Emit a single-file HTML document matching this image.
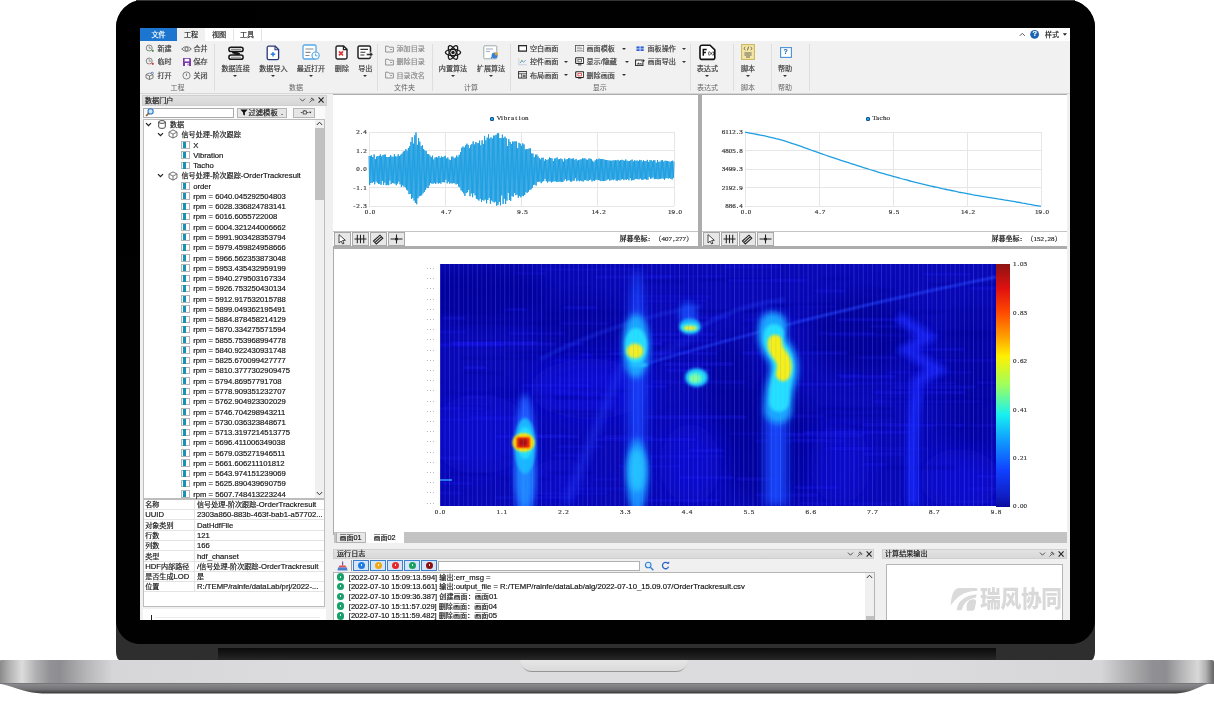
<!DOCTYPE html><html lang="zh"><head><meta charset="utf-8"><title>DataLab</title><style>
*{box-sizing:border-box;margin:0;padding:0}
html,body{width:1214px;height:714px;overflow:hidden;background:#fff}
body{position:relative;font-family:"Liberation Sans","Noto Sans CJK SC",sans-serif;font-size:7.5px;color:#222;line-height:1}
.a{position:absolute}
.t{position:absolute;white-space:nowrap;line-height:10px;height:10px;font-size:7.1px;color:#161616;-webkit-text-stroke-width:.18px}
.g{color:#555}
.mono{font-family:"Liberation Serif","Noto Serif CJK SC",serif}
</style></head><body><div id="root" style="position:absolute;left:0;top:0;width:1214px;height:714px;will-change:transform;opacity:.999">
<div class="a" style="left:116px;top:0;width:979px;height:661px;background:#2e2e2e;border-radius:27px 27px 5px 5px / 27px 27px 9px 9px"></div>
<div class="a" style="left:218px;top:648px;width:778px;height:13px;background:linear-gradient(#0a0a0a,#1c1c1c 60%,#2a2a2a)"></div>
<div class="a" style="left:116px;top:0;width:979px;height:644px;background:#000;border-radius:27px 27px 26px 26px"></div>
<div class="a" style="left:136px;top:0;width:939px;height:1px;background:#343434"></div>
<div class="a" style="left:0;top:660px;width:1214px;height:23.5px;border-radius:1px 2px 0 0;background:linear-gradient(90deg,#8a8a8a 0,#b4b4b4 10px,#dcdcdc 22px,#b0b0b2 36px,#929296 50px,#8e8e92 60px,#b4b4b6 85px,#d6d6d8 113px,#dcdcde 300px,#dcdcde 900px,#d6d6d8 1101px,#b4b4b6 1125px,#909094 1153px,#8e8e92 1166px,#b8b8ba 1183px,#d8d8d8 1198px,#b0b0b0 1206px,#6a6a6a 1213px)"></div>
<svg class="a" style="left:0;top:683px" width="1214" height="12" viewBox="0 0 1214 12"><defs><linearGradient id="bb" x1="0" y1="0" x2="0" y2="1"><stop offset="0" stop-color="#6a6a6e"/><stop offset="0.12" stop-color="#8a8a8e"/><stop offset="0.6" stop-color="#737376"/><stop offset="1" stop-color="#38383a"/></linearGradient></defs><path d="M0 0 H1214 V.6 L1208 .8 C1196 5 1190 10.2 1176 10.400 H42 C28 10.400 18 5 0 .8 Z" fill="url(#bb)"/></svg>
<div class="a" style="left:520px;top:660px;width:168px;height:12px;border-radius:0 0 12px 12px;background:linear-gradient(#e4e4e4,#d2d2d2 60%,#8e8e8e)"></div>
<div class="a" style="left:521px;top:660px;width:166px;height:10.5px;border-radius:0 0 11px 11px;background:linear-gradient(#e6e6e6,#dadada)"></div>
<div class="a" style="left:140px;top:28px;width:930px;height:592px;background:#f0f0f0;overflow:hidden"></div>
<div class="a" style="left:140px;top:28px;width:930px;height:13px;background:#fff"></div>
<div class="a" style="left:140px;top:28px;width:37px;height:12.5px;background:#1c76cf"></div>
<div class="a" style="left:177px;top:28px;width:28px;height:13px;background:#f1f1f1"></div>
<div class="a" style="left:233px;top:29px;width:1px;height:12px;background:#e3e3e3"></div>
<div class="a" style="left:261px;top:29px;width:1px;height:12px;background:#e3e3e3"></div>
<div class="t" style="left:140px;top:30.2px;width:37px;text-align:center;color:#fff">文件</div>
<div class="t" style="left:177px;top:30.2px;width:28px;text-align:center;color:#222">工程</div>
<div class="t" style="left:205px;top:30.2px;width:28px;text-align:center;color:#222">视图</div>
<div class="t" style="left:233px;top:30.2px;width:28px;text-align:center;color:#222">工具</div>
<svg class="a" style="left:1018px;top:29px" width="52" height="11" viewBox="0 0 52 11"><path d="M1.8 6.8 L4.3 4.3 L6.8 6.8" fill="none" stroke="#555" stroke-width="1"/><circle cx="16.6" cy="5.3" r="4.4" fill="#1c62b4"/><path d="M44.8 4.3 h4.2 l-2.1 2.5z" fill="#222"/></svg>
<div class="t" style="left:1032.400px;top:29.400px;color:#fff;font-size:7.500px;font-weight:bold">?</div>
<div class="t" style="left:1045px;top:29.800px;font-size:7px">样式</div>
<div class="a" style="left:140px;top:40.5px;width:930px;height:53px;background:#f1f1f1;border-bottom:1px solid #d6d6d6"></div>
<div class="a" style="left:214px;top:44px;width:1px;height:47px;background:#dedede"></div>
<div class="a" style="left:377.4px;top:44px;width:1px;height:47px;background:#dedede"></div>
<div class="a" style="left:431.6px;top:44px;width:1px;height:47px;background:#dedede"></div>
<div class="a" style="left:510.4px;top:44px;width:1px;height:47px;background:#dedede"></div>
<div class="a" style="left:690px;top:44px;width:1px;height:47px;background:#dedede"></div>
<div class="a" style="left:732.6px;top:44px;width:1px;height:47px;background:#dedede"></div>
<div class="a" style="left:770.6px;top:44px;width:1px;height:47px;background:#dedede"></div>
<div class="a" style="left:808.6px;top:44px;width:1px;height:47px;background:#dedede"></div>
<div class="t g" style="left:147.5px;top:83px;width:60px;text-align:center;font-size:7px;color:#666;-webkit-text-stroke-width:0">工程</div>
<div class="t g" style="left:266px;top:83px;width:60px;text-align:center;font-size:7px;color:#666;-webkit-text-stroke-width:0">数据</div>
<div class="t g" style="left:374.4px;top:83px;width:60px;text-align:center;font-size:7px;color:#666;-webkit-text-stroke-width:0">文件夹</div>
<div class="t g" style="left:441px;top:83px;width:60px;text-align:center;font-size:7px;color:#666;-webkit-text-stroke-width:0">计算</div>
<div class="t g" style="left:569.7px;top:83px;width:60px;text-align:center;font-size:7px;color:#666;-webkit-text-stroke-width:0">显示</div>
<div class="t g" style="left:677.4px;top:83px;width:60px;text-align:center;font-size:7px;color:#666;-webkit-text-stroke-width:0">表达式</div>
<div class="t g" style="left:718px;top:83px;width:60px;text-align:center;font-size:7px;color:#666;-webkit-text-stroke-width:0">脚本</div>
<div class="t g" style="left:755px;top:83px;width:60px;text-align:center;font-size:7px;color:#666;-webkit-text-stroke-width:0">帮助</div>
<div class="t" style="left:157.5px;top:44.2px;color:#3a3a3a">新建</div>
<div class="t" style="left:193.5px;top:44.2px;color:#3a3a3a">合并</div>
<div class="t" style="left:157.5px;top:57.4px;color:#3a3a3a">临时</div>
<div class="t" style="left:193.5px;top:57.4px;color:#3a3a3a">保存</div>
<div class="t" style="left:157.5px;top:70.7px;color:#3a3a3a">打开</div>
<div class="t" style="left:193.5px;top:70.7px;color:#3a3a3a">关闭</div>
<svg class="a" style="left:145px;top:44px" width="10" height="9" viewBox="0 0 10 9"><circle cx="4.2" cy="4" r="3" fill="none" stroke="#777" stroke-width="0.9"/><path d="M4.2 2.2v2h1.6" stroke="#777" stroke-width=".8" fill="none"/><circle cx="7.8" cy="6.8" r="1.1" fill="#3a9a3a"/></svg>
<svg class="a" style="left:145px;top:57.2px" width="10" height="9" viewBox="0 0 10 9"><circle cx="4.2" cy="4" r="3" fill="none" stroke="#777" stroke-width="0.9"/><path d="M4.2 2.2v2h1.6" stroke="#777" stroke-width=".8" fill="none"/><circle cx="7.8" cy="6.8" r="1.1" fill="#d33"/></svg>
<svg class="a" style="left:145px;top:70.5px" width="10" height="9" viewBox="0 0 10 9"><path d="M1 3.5 l3.5-1.5 3.5 1.5v3.5l-3.5 1.5-3.5-1.5z M1 3.5l3.5 1.5 3.5-1.5 M4.5 5v3.5" fill="none" stroke="#666" stroke-width="0.8"/><path d="M6 1.5 q2-.8 3 1" stroke="#2a6fc0" stroke-width=".8" fill="none"/></svg>
<svg class="a" style="left:181px;top:44.5px" width="11" height="8" viewBox="0 0 11 8"><path d="M.7 4 Q5.5-.8 10.3 4 Q5.5 8.8 .7 4z" fill="none" stroke="#666" stroke-width=".9"/><circle cx="5.5" cy="4" r="1.6" fill="none" stroke="#666" stroke-width=".9"/></svg>
<svg class="a" style="left:181.5px;top:57px" width="10" height="10" viewBox="0 0 10 10"><path d="M1 1h7l1 1v7h-8z" fill="#7b3aa8"/><rect x="2.6" y="1.8" width="4.6" height="2.6" fill="#fff"/><rect x="3" y="6" width="4" height="3" fill="#fff"/><rect x="5.5" y="6.5" width="1" height="2" fill="#7b3aa8"/></svg>
<svg class="a" style="left:182px;top:70.5px" width="9" height="9" viewBox="0 0 9 9"><circle cx="4.5" cy="4.5" r="3.6" fill="none" stroke="#777" stroke-width=".9"/><path d="M4.5 2.5v2.6" stroke="#777" stroke-width=".9"/></svg>
<div class="t" style="left:210.6px;top:63.6px;width:50px;text-align:center;color:#3a3a3a">数据连接</div>
<div class="a" style="left:233.4px;top:75px;border:2.2px solid transparent;border-top:2.6px solid #333;width:0;height:0"></div>
<div class="t" style="left:248.4px;top:63.6px;width:50px;text-align:center;color:#3a3a3a">数据导入</div>
<div class="a" style="left:271.2px;top:75px;border:2.2px solid transparent;border-top:2.6px solid #333;width:0;height:0"></div>
<div class="t" style="left:286px;top:63.6px;width:50px;text-align:center;color:#3a3a3a">最近打开</div>
<div class="a" style="left:308.8px;top:75px;border:2.2px solid transparent;border-top:2.6px solid #333;width:0;height:0"></div>
<div class="t" style="left:316.9px;top:63.6px;width:50px;text-align:center;color:#3a3a3a">删除</div>
<div class="t" style="left:340.3px;top:63.6px;width:50px;text-align:center;color:#3a3a3a">导出</div>
<div class="a" style="left:363.1px;top:75px;border:2.2px solid transparent;border-top:2.6px solid #333;width:0;height:0"></div>
<div class="t" style="left:428px;top:63.6px;width:50px;text-align:center;color:#3a3a3a">内置算法</div>
<div class="a" style="left:450.8px;top:75px;border:2.2px solid transparent;border-top:2.6px solid #333;width:0;height:0"></div>
<div class="t" style="left:466px;top:63.6px;width:50px;text-align:center;color:#3a3a3a">扩展算法</div>
<div class="a" style="left:488.8px;top:75px;border:2.2px solid transparent;border-top:2.6px solid #333;width:0;height:0"></div>
<div class="t" style="left:682.4px;top:63.6px;width:50px;text-align:center;color:#3a3a3a">表达式</div>
<div class="a" style="left:705.2px;top:75px;border:2.2px solid transparent;border-top:2.6px solid #333;width:0;height:0"></div>
<div class="t" style="left:723px;top:63.6px;width:50px;text-align:center;color:#3a3a3a">脚本</div>
<div class="a" style="left:745.8px;top:75px;border:2.2px solid transparent;border-top:2.6px solid #333;width:0;height:0"></div>
<div class="t" style="left:760px;top:63.6px;width:50px;text-align:center;color:#3a3a3a">帮助</div>
<div class="a" style="left:782.8px;top:75px;border:2.2px solid transparent;border-top:2.6px solid #333;width:0;height:0"></div>
<svg class="a" style="left:227px;top:44.5px" width="18" height="16" viewBox="0 0 18 16"><path d="M5.500 6.600 L12.500 9.800" stroke="#1a1a1a" stroke-width="3.200"/><rect x="1.900" y="2.300" width="14.200" height="4.200" rx="2.100" fill="#f1f1f1" stroke="#151515" stroke-width="1.500"/><rect x="1.900" y="10.100" width="14.200" height="4.200" rx="2.100" fill="#f1f1f1" stroke="#151515" stroke-width="1.500"/><path d="M4 4.400h10M4 12.200h10" stroke="#8a8a8a" stroke-width="1.100"/></svg>
<svg class="a" style="left:266px;top:44.5px" width="15" height="16" viewBox="0 0 15 16"><path d="M2.6 1.2h6.6l3.4 3.4v8.6a1.4 1.4 0 0 1-1.4 1.4h-8.6a1.4 1.4 0 0 1-1.4-1.4v-10.6a1.4 1.4 0 0 1 1.4-1.4z" fill="#fff" stroke="#27367f" stroke-width="1.3"/><path d="M9 1.2v3.6h3.6" fill="none" stroke="#27367f" stroke-width="1.1"/><path d="M7 7v4.6M4.7 9.3h4.6" stroke="#2b7fe0" stroke-width="1.5"/></svg>
<svg class="a" style="left:302px;top:44px" width="19" height="17" viewBox="0 0 19 17"><rect x="1" y="1" width="13" height="14" rx="1.6" fill="#fff" stroke="#55a8e6" stroke-width="1.3"/><path d="M3.5 5h8M3.5 8.3h5M3.5 11.5h4" stroke="#8a8a8a" stroke-width="1.2"/><circle cx="13.6" cy="11.6" r="3.6" fill="#fff" stroke="#55a8e6" stroke-width="1.2"/><path d="M13.6 9.6v2.2h1.8" fill="none" stroke="#55a8e6" stroke-width="1"/></svg>
<svg class="a" style="left:335px;top:45px" width="14" height="15" viewBox="0 0 14 15"><path d="M2.4 1h6.2l3.4 3.4v8.2a1.4 1.4 0 0 1-1.4 1.4h-8.2a1.4 1.4 0 0 1-1.4-1.4v-10.2a1.4 1.4 0 0 1 1.4-1.4z" fill="#fff" stroke="#222" stroke-width="1.4"/><path d="M8.4 1v3.6h3.6" fill="none" stroke="#222" stroke-width="1.2"/><path d="M4 6.4l4 4M8 6.4l-4 4" stroke="#e03030" stroke-width="1.6"/></svg>
<svg class="a" style="left:357px;top:45px" width="17" height="15" viewBox="0 0 17 15"><rect x="1" y="1" width="12.5" height="12.5" rx="1.4" fill="#fff" stroke="#222" stroke-width="1.5"/><path d="M3.4 4.4h7.6M3.4 7.2h5M3.4 10h4" stroke="#333" stroke-width="1.1"/><path d="M9.6 8.4h3.6v-1.6l3 2.6-3 2.6v-1.6h-3.6z" fill="#222" stroke="#fff" stroke-width=".5"/></svg>
<svg class="a" style="left:444px;top:43.5px" width="18" height="17" viewBox="0 0 18 17"><g fill="none" stroke="#1a1a1a" stroke-width="1.3"><ellipse cx="9" cy="8.5" rx="7.6" ry="3.2"/><ellipse cx="9" cy="8.5" rx="7.6" ry="3.2" transform="rotate(60 9 8.5)"/><ellipse cx="9" cy="8.5" rx="7.6" ry="3.2" transform="rotate(-60 9 8.5)"/></g><circle cx="9" cy="8.5" r="1.7" fill="#1a1a1a"/></svg>
<svg class="a" style="left:483px;top:45px" width="17" height="16" viewBox="0 0 17 16"><rect x=".8" y=".8" width="13" height="13" rx="1" fill="#fff" stroke="#9aa" stroke-width="1"/><path d="M3 4h7M3 6.4h4" stroke="#9ab" stroke-width="1"/><circle cx="11.6" cy="10.4" r="3" fill="#3a7fd6"/><circle cx="13.2" cy="8.8" r="1.6" fill="#e0a030"/><path d="M8 13l2.4-2" stroke="#3a7fd6" stroke-width="1.2"/></svg>
<svg class="a" style="left:698.5px;top:44px" width="18" height="17" viewBox="0 0 18 17"><path d="M3 1.2h8l4.8 4.6v7.6a2 2 0 0 1-2 2h-10.800a2 2 0 0 1-2-2v-10.2a2 2 0 0 1 2-2z" fill="#fff" stroke="#111" stroke-width="1.6"/><path d="M4.3 11.800v-6.200h3.400M4.3 8.600h2.6" fill="none" stroke="#111" stroke-width="1.5"/><path d="M10.3 7.400q-1.4 2 0 4.200M14 7.400q1.4 2 0 4.200M11.3 8.400l1.8 2.200M13.1 8.400l-1.8 2.2" fill="none" stroke="#111" stroke-width=".8"/></svg>
<svg class="a" style="left:741px;top:44px" width="14" height="16" viewBox="0 0 14 16"><rect x=".6" y=".6" width="12.8" height="14.8" fill="#f4e7a6" stroke="#c9b458" stroke-width="1"/><path d="M4.4 3l-1.6 1.5 1.6 1.500M9.6 3l1.6 1.5-1.6 1.500M7.6 2.600l-1.2 3.800M3.4 9h7.200M3.4 11h7.200M5 13h4" fill="none" stroke="#444" stroke-width=".8"/></svg>
<svg class="a" style="left:779.500px;top:46.500px" width="12" height="11" viewBox="0 0 12 11"><rect x=".6" y=".6" width="10.8" height="9.8" fill="#fff" stroke="#4a90d9" stroke-width="1.1"/></svg>
<div class="t" style="left:783.400px;top:47.200px;color:#2b6fc0;font-size:7px;font-weight:bold">?</div>
<div class="t" style="left:396.5px;top:44.2px;color:#8a8a8a">添加目录</div>
<svg class="a" style="left:384.500px;top:44.5px" width="9" height="8" viewBox="0 0 9 8"><path d="M.6 1.200h2.600l.8 1h4.400v4.800h-7.800z" fill="none" stroke="#8a8a8a" stroke-width=".9"/><path d="M5 4.500h2" stroke="#8a8a8a" stroke-width=".8"/></svg>
<div class="t" style="left:396.5px;top:57.4px;color:#8a8a8a">删除目录</div>
<svg class="a" style="left:384.500px;top:57.7px" width="9" height="8" viewBox="0 0 9 8"><path d="M.6 1.200h2.600l.8 1h4.400v4.800h-7.800z" fill="none" stroke="#8a8a8a" stroke-width=".9"/><path d="M5 4.500h2" stroke="#8a8a8a" stroke-width=".8"/></svg>
<div class="t" style="left:396.5px;top:70.7px;color:#8a8a8a">目录改名</div>
<svg class="a" style="left:384.500px;top:71px" width="9" height="8" viewBox="0 0 9 8"><path d="M.6 1.200h2.600l.8 1h4.400v4.800h-7.800z" fill="none" stroke="#8a8a8a" stroke-width=".9"/><path d="M5 4.500h2" stroke="#8a8a8a" stroke-width=".8"/></svg>
<div class="t" style="left:530px;top:44.2px;color:#3a3a3a">空白画面</div>
<div class="t" style="left:586.5px;top:44.2px;color:#3a3a3a">画面模板</div>
<div class="t" style="left:647.5px;top:44.2px;color:#3a3a3a">面板操作</div>
<div class="t" style="left:530px;top:57.4px;color:#3a3a3a">控件画面</div>
<div class="t" style="left:586.5px;top:57.4px;color:#3a3a3a">显示<span style="font-size:7.4px">/</span>隐藏</div>
<div class="t" style="left:647.5px;top:57.4px;color:#3a3a3a">画面导出</div>
<div class="t" style="left:530px;top:70.7px;color:#3a3a3a">布局画面</div>
<div class="t" style="left:586.5px;top:70.7px;color:#3a3a3a">删除画面</div>
<div class="a" style="left:563.7px;top:60.7px;border:2px solid transparent;border-top:2.400px solid #333;width:0;height:0"></div>
<div class="a" style="left:563.7px;top:74px;border:2px solid transparent;border-top:2.400px solid #333;width:0;height:0"></div>
<div class="a" style="left:621.7px;top:47.5px;border:2px solid transparent;border-top:2.400px solid #333;width:0;height:0"></div>
<div class="a" style="left:625px;top:60.7px;border:2px solid transparent;border-top:2.400px solid #333;width:0;height:0"></div>
<div class="a" style="left:621.7px;top:74px;border:2px solid transparent;border-top:2.400px solid #333;width:0;height:0"></div>
<div class="a" style="left:681.7px;top:47.5px;border:2px solid transparent;border-top:2.400px solid #333;width:0;height:0"></div>
<div class="a" style="left:681.7px;top:60.7px;border:2px solid transparent;border-top:2.400px solid #333;width:0;height:0"></div>
<svg class="a" style="left:517.83px;top:45.1px" width="9.35" height="6.8" viewBox="0 0 11 8"><rect x=".8" y=".8" width="9.4" height="6.4" fill="#fff" stroke="#222" stroke-width="1.5"/></svg>
<svg class="a" style="left:517.83px;top:58.17px" width="9.35" height="7.65" viewBox="0 0 11 9"><path d="M1 .5v7.500h9.5" fill="none" stroke="#b9c4d6" stroke-width=".9"/><path d="M2.5 6l2-3 2 2 2.5-2.5" fill="none" stroke="#3a9ad6" stroke-width="1"/><circle cx="4.5" cy="3" r=".9" fill="#e0a030"/></svg>
<svg class="a" style="left:517.83px;top:71.17px" width="9.35" height="7.65" viewBox="0 0 11 9"><rect x=".7" y=".7" width="9.6" height="7.6" fill="#fff" stroke="#333" stroke-width="1.2"/><path d="M.7 3.200h9.600M4 3.200v5" stroke="#333" stroke-width=".9"/><rect x="5.4" y="4.4" width="3.6" height="2.8" fill="#666"/></svg>
<svg class="a" style="left:574.83px;top:44.67px" width="9.35" height="7.65" viewBox="0 0 11 9"><rect x=".6" y=".6" width="9.8" height="7.8" fill="#fff" stroke="#555" stroke-width="1"/><path d="M2 2.600h4M2 4.400h7M2 6.400h7M7 2v2.4" stroke="#777" stroke-width=".8"/></svg>
<svg class="a" style="left:574.800px;top:57.4px" width="9.400" height="8.600" viewBox="0 0 11 10"><rect x=".8" y=".8" width="9.4" height="6.8" rx="1" fill="#fff" stroke="#222" stroke-width="1.3"/><path d="M3.5 9.200h4" stroke="#222" stroke-width="1.1"/><rect x="3.4" y="2.7" width="4.2" height="3" fill="none" stroke="#444" stroke-width=".9"/></svg>
<svg class="a" style="left:574.800px;top:70.7px" width="9.400" height="8.600" viewBox="0 0 11 10"><rect x=".8" y=".8" width="9.4" height="6.8" rx="1" fill="#fff" stroke="#222" stroke-width="1.3"/><path d="M3.5 9.200h4" stroke="#222" stroke-width="1.1"/><rect x="3.4" y="2.7" width="4.2" height="3" fill="none" stroke="#d33" stroke-width=".9"/></svg>
<svg class="a" style="left:636.25px;top:45.52px" width="8.5" height="5.95" viewBox="0 0 10 7"><rect x=".5" y=".5" width="3.8" height="2.5" fill="#2f62d8"/><rect x="5.3" y=".5" width="3.8" height="2.5" fill="#2f62d8"/><rect x=".5" y="3.8" width="3.8" height="2.5" fill="#2f62d8"/><rect x="5.3" y="3.8" width="3.8" height="2.5" fill="#2f62d8"/></svg>
<svg class="a" style="left:635.4px;top:57.75px" width="10.2" height="8.5" viewBox="0 0 12 10"><rect x=".7" y="2.4" width="8.6" height="6.6" fill="#fff" stroke="#222" stroke-width="1.2"/><path d="M2 7.600l2-2.6 1.6 1.8 1.4-1.2 1.6 2z" fill="#444"/><path d="M7 2.600h2.400v-1.600l2.4 2.2-2.4 2.200v-1.400h-2.400z" fill="#222" stroke="#fff" stroke-width=".4"/></svg>
<div class="a" style="left:142px;top:95px;width:185px;height:10.500px;background:linear-gradient(#e2e2e2,#d6d6d6);border:1px solid #cfcfcf"></div>
<div class="t" style="left:145px;top:96px">数据门户</div>
<svg class="a" style="left:299px;top:96.3px" width="27" height="8" viewBox="0 0 27 8"><path d="M1 2.600l2.5 2.6 2.5-2.6" fill="none" stroke="#444" stroke-width=".9"/><path d="M10.5 6.500l2-2M12 2l2.8 2.800M12.8 1.600l2.6 2.600M11.6 3.400l1.8 1.8" stroke="#444" stroke-width=".8" fill="none"/><path d="M19.6 1.400l5 5.200M24.6 1.400l-5 5.2" stroke="#222" stroke-width="1.1"/></svg>
<div class="a" style="left:142px;top:105.500px;width:183px;height:14px;background:#fafafa"></div>
<div class="a" style="left:143px;top:107.500px;width:91px;height:10px;background:#fff;border:1px solid #ababab"></div>
<svg class="a" style="left:145px;top:108.300px" width="10" height="9" viewBox="0 0 10 9"><circle cx="5.6" cy="3.4" r="2.6" fill="#cfe6fb" stroke="#2b78c8" stroke-width="1.1"/><path d="M3.6 5.400l-2.6 2.6" stroke="#8a5a2b" stroke-width="1.5"/></svg>
<div class="a" style="left:236.500px;top:107.500px;width:50.500px;height:10px;background:#e6e6e6;border:1px solid #b5b5b5"></div>
<svg class="a" style="left:239.500px;top:109.200px" width="8" height="7" viewBox="0 0 8 7"><path d="M.3 .4h7.400l-2.8 3.200v3l-1.8-1v-2z" fill="#111"/></svg>
<div class="t" style="left:248.500px;top:108.3px;font-size:7.3px">过滤模板</div>
<div class="a" style="left:281px;top:114px;border:1.500px solid transparent;border-top:1.800px solid #222;width:0;height:0"></div>
<div class="a" style="left:292.500px;top:107.500px;width:22px;height:10px;background:#e6e6e6;border:1px solid #b5b5b5"></div>
<svg class="a" style="left:299.500px;top:110px" width="12" height="5" viewBox="0 0 16 6"><path d="M1 3h2.400M9.4 3h2" stroke="#222" stroke-width="1"/><rect x="4.2" y="1" width="4.6" height="4" fill="none" stroke="#222" stroke-width=".9"/><path d="M5.5 1v-1h2" stroke="#222" stroke-width=".7" fill="none"/><path d="M12 2h3.200l-1.6 2.200z" fill="#222"/></svg>
<div class="a" style="left:143px;top:119px;width:182px;height:379.500px;background:#fff;border:1px solid #bdbdbd"></div>
<div class="a" style="left:314.500px;top:120px;width:9.500px;height:377.500px;background:#f0f0f0"></div>
<div class="a" style="left:315.300px;top:128px;width:8.400px;height:72px;background:#c1c1c1"></div>
<svg class="a" style="left:316px;top:121px" width="7" height="5" viewBox="0 0 7 5"><path d="M.8 4l2.7-2.8 2.7 2.8" fill="none" stroke="#333" stroke-width="1"/></svg>
<svg class="a" style="left:316px;top:490.500px" width="7" height="5" viewBox="0 0 7 5"><path d="M.8 1l2.7 2.8 2.7-2.8" fill="none" stroke="#333" stroke-width="1"/></svg>
<svg class="a" style="left:145px;top:121.8px" width="7" height="5" viewBox="0 0 7 5"><path d="M1 1.100l2.500 2.500 2.500-2.500" fill="none" stroke="#222" stroke-width="1.300"/></svg>
<svg class="a" style="left:157.500px;top:119.8px" width="8" height="9" viewBox="0 0 8 9"><path d="M.7 2v5c0 1.8 6.6 1.8 6.6 0v-5" fill="none" stroke="#333" stroke-width=".9"/><ellipse cx="4" cy="2" rx="3.3" ry="1.4" fill="none" stroke="#333" stroke-width=".9"/></svg>
<div class="t" style="left:170px;top:120px">数据</div>
<svg class="a" style="left:156.5px;top:132.07px" width="7" height="5" viewBox="0 0 7 5"><path d="M1 1.100l2.500 2.500 2.500-2.500" fill="none" stroke="#222" stroke-width="1.300"/></svg>
<svg class="a" style="left:168.2px;top:129.47px" width="10" height="10" viewBox="0 0 10 10"><path d="M5 .9L9 3V7L5 9.1L1 7V3Z" fill="none" stroke="#555" stroke-width=".85" stroke-linejoin="round"/><path d="M1.3 3.2L5 5.1L8.700 3.2M5 5.1V9" fill="none" stroke="#555" stroke-width=".8"/></svg>
<div class="t" style="left:181.5px;top:130.27px">信号处理<span style="font-size:7.7px">-</span>阶次跟踪</div>
<div class="a" style="left:181px;top:141.04px;width:8.500px;height:7.500px;border:1px solid #b5b5b5;background:#fff"></div>
<div class="a" style="left:183px;top:141.54px;width:2.600px;height:6.500px;background:#1593b5"></div>
<div class="t" style="left:193.2px;top:140.54px"><span style="font-size:7.7px">X</span></div>
<div class="a" style="left:181px;top:151.31px;width:8.500px;height:7.500px;border:1px solid #b5b5b5;background:#fff"></div>
<div class="a" style="left:183px;top:151.81px;width:2.600px;height:6.500px;background:#1593b5"></div>
<div class="t" style="left:193.2px;top:150.81px"><span style="font-size:7.7px">Vibration</span></div>
<div class="a" style="left:181px;top:161.58px;width:8.500px;height:7.500px;border:1px solid #b5b5b5;background:#fff"></div>
<div class="a" style="left:183px;top:162.08px;width:2.600px;height:6.500px;background:#1593b5"></div>
<div class="t" style="left:193.2px;top:161.08px"><span style="font-size:7.7px">Tacho</span></div>
<svg class="a" style="left:156.5px;top:173.15px" width="7" height="5" viewBox="0 0 7 5"><path d="M1 1.100l2.500 2.500 2.500-2.500" fill="none" stroke="#222" stroke-width="1.300"/></svg>
<svg class="a" style="left:168.2px;top:170.55px" width="10" height="10" viewBox="0 0 10 10"><path d="M5 .9L9 3V7L5 9.1L1 7V3Z" fill="none" stroke="#555" stroke-width=".85" stroke-linejoin="round"/><path d="M1.3 3.2L5 5.1L8.700 3.2M5 5.1V9" fill="none" stroke="#555" stroke-width=".8"/></svg>
<div class="t" style="left:181.5px;top:171.35px">信号处理<span style="font-size:7.7px">-</span>阶次跟踪<span style="font-size:7.7px">-OrderTrackresult</span></div>
<div class="a" style="left:181px;top:182.12px;width:8.500px;height:7.500px;border:1px solid #b5b5b5;background:#fff"></div>
<div class="a" style="left:183px;top:182.62px;width:2.600px;height:6.500px;background:#1593b5"></div>
<div class="t" style="left:193.2px;top:181.62px"><span style="font-size:7.7px">order</span></div>
<div class="a" style="left:181px;top:192.39px;width:8.500px;height:7.500px;border:1px solid #b5b5b5;background:#fff"></div>
<div class="a" style="left:183px;top:192.89px;width:2.600px;height:6.500px;background:#1593b5"></div>
<div class="t" style="left:193.2px;top:191.89px"><span style="font-size:7.7px">rpm = 6040.045292504803</span></div>
<div class="a" style="left:181px;top:202.66px;width:8.500px;height:7.500px;border:1px solid #b5b5b5;background:#fff"></div>
<div class="a" style="left:183px;top:203.16px;width:2.600px;height:6.500px;background:#1593b5"></div>
<div class="t" style="left:193.2px;top:202.16px"><span style="font-size:7.7px">rpm = 6028.336824783141</span></div>
<div class="a" style="left:181px;top:212.93px;width:8.500px;height:7.500px;border:1px solid #b5b5b5;background:#fff"></div>
<div class="a" style="left:183px;top:213.43px;width:2.600px;height:6.500px;background:#1593b5"></div>
<div class="t" style="left:193.2px;top:212.43px"><span style="font-size:7.7px">rpm = 6016.6055722008</span></div>
<div class="a" style="left:181px;top:223.2px;width:8.500px;height:7.500px;border:1px solid #b5b5b5;background:#fff"></div>
<div class="a" style="left:183px;top:223.7px;width:2.600px;height:6.500px;background:#1593b5"></div>
<div class="t" style="left:193.2px;top:222.7px"><span style="font-size:7.7px">rpm = 6004.321244006662</span></div>
<div class="a" style="left:181px;top:233.47px;width:8.500px;height:7.500px;border:1px solid #b5b5b5;background:#fff"></div>
<div class="a" style="left:183px;top:233.97px;width:2.600px;height:6.500px;background:#1593b5"></div>
<div class="t" style="left:193.2px;top:232.97px"><span style="font-size:7.7px">rpm = 5991.903428353794</span></div>
<div class="a" style="left:181px;top:243.74px;width:8.500px;height:7.500px;border:1px solid #b5b5b5;background:#fff"></div>
<div class="a" style="left:183px;top:244.24px;width:2.600px;height:6.500px;background:#1593b5"></div>
<div class="t" style="left:193.2px;top:243.24px"><span style="font-size:7.7px">rpm = 5979.459824958666</span></div>
<div class="a" style="left:181px;top:254.01px;width:8.500px;height:7.500px;border:1px solid #b5b5b5;background:#fff"></div>
<div class="a" style="left:183px;top:254.51px;width:2.600px;height:6.500px;background:#1593b5"></div>
<div class="t" style="left:193.2px;top:253.51px"><span style="font-size:7.7px">rpm = 5966.562353873048</span></div>
<div class="a" style="left:181px;top:264.28px;width:8.500px;height:7.500px;border:1px solid #b5b5b5;background:#fff"></div>
<div class="a" style="left:183px;top:264.78px;width:2.600px;height:6.500px;background:#1593b5"></div>
<div class="t" style="left:193.2px;top:263.78px"><span style="font-size:7.7px">rpm = 5953.435432959199</span></div>
<div class="a" style="left:181px;top:274.55px;width:8.500px;height:7.500px;border:1px solid #b5b5b5;background:#fff"></div>
<div class="a" style="left:183px;top:275.05px;width:2.600px;height:6.500px;background:#1593b5"></div>
<div class="t" style="left:193.2px;top:274.05px"><span style="font-size:7.7px">rpm = 5940.279503167334</span></div>
<div class="a" style="left:181px;top:284.82px;width:8.500px;height:7.500px;border:1px solid #b5b5b5;background:#fff"></div>
<div class="a" style="left:183px;top:285.32px;width:2.600px;height:6.500px;background:#1593b5"></div>
<div class="t" style="left:193.2px;top:284.32px"><span style="font-size:7.7px">rpm = 5926.753250430134</span></div>
<div class="a" style="left:181px;top:295.09px;width:8.500px;height:7.500px;border:1px solid #b5b5b5;background:#fff"></div>
<div class="a" style="left:183px;top:295.59px;width:2.600px;height:6.500px;background:#1593b5"></div>
<div class="t" style="left:193.2px;top:294.59px"><span style="font-size:7.7px">rpm = 5912.917532015788</span></div>
<div class="a" style="left:181px;top:305.36px;width:8.500px;height:7.500px;border:1px solid #b5b5b5;background:#fff"></div>
<div class="a" style="left:183px;top:305.86px;width:2.600px;height:6.500px;background:#1593b5"></div>
<div class="t" style="left:193.2px;top:304.86px"><span style="font-size:7.7px">rpm = 5899.049362195491</span></div>
<div class="a" style="left:181px;top:315.63px;width:8.500px;height:7.500px;border:1px solid #b5b5b5;background:#fff"></div>
<div class="a" style="left:183px;top:316.13px;width:2.600px;height:6.500px;background:#1593b5"></div>
<div class="t" style="left:193.2px;top:315.13px"><span style="font-size:7.7px">rpm = 5884.878458214129</span></div>
<div class="a" style="left:181px;top:325.9px;width:8.500px;height:7.500px;border:1px solid #b5b5b5;background:#fff"></div>
<div class="a" style="left:183px;top:326.4px;width:2.600px;height:6.500px;background:#1593b5"></div>
<div class="t" style="left:193.2px;top:325.4px"><span style="font-size:7.7px">rpm = 5870.334275571594</span></div>
<div class="a" style="left:181px;top:336.17px;width:8.500px;height:7.500px;border:1px solid #b5b5b5;background:#fff"></div>
<div class="a" style="left:183px;top:336.67px;width:2.600px;height:6.500px;background:#1593b5"></div>
<div class="t" style="left:193.2px;top:335.67px"><span style="font-size:7.7px">rpm = 5855.753968994778</span></div>
<div class="a" style="left:181px;top:346.44px;width:8.500px;height:7.500px;border:1px solid #b5b5b5;background:#fff"></div>
<div class="a" style="left:183px;top:346.94px;width:2.600px;height:6.500px;background:#1593b5"></div>
<div class="t" style="left:193.2px;top:345.94px"><span style="font-size:7.7px">rpm = 5840.922430931748</span></div>
<div class="a" style="left:181px;top:356.71px;width:8.500px;height:7.500px;border:1px solid #b5b5b5;background:#fff"></div>
<div class="a" style="left:183px;top:357.21px;width:2.600px;height:6.500px;background:#1593b5"></div>
<div class="t" style="left:193.2px;top:356.21px"><span style="font-size:7.7px">rpm = 5825.670099427777</span></div>
<div class="a" style="left:181px;top:366.98px;width:8.500px;height:7.500px;border:1px solid #b5b5b5;background:#fff"></div>
<div class="a" style="left:183px;top:367.48px;width:2.600px;height:6.500px;background:#1593b5"></div>
<div class="t" style="left:193.2px;top:366.48px"><span style="font-size:7.7px">rpm = 5810.3777302909475</span></div>
<div class="a" style="left:181px;top:377.25px;width:8.500px;height:7.500px;border:1px solid #b5b5b5;background:#fff"></div>
<div class="a" style="left:183px;top:377.75px;width:2.600px;height:6.500px;background:#1593b5"></div>
<div class="t" style="left:193.2px;top:376.75px"><span style="font-size:7.7px">rpm = 5794.86957791708</span></div>
<div class="a" style="left:181px;top:387.52px;width:8.500px;height:7.500px;border:1px solid #b5b5b5;background:#fff"></div>
<div class="a" style="left:183px;top:388.02px;width:2.600px;height:6.500px;background:#1593b5"></div>
<div class="t" style="left:193.2px;top:387.02px"><span style="font-size:7.7px">rpm = 5778.909351232707</span></div>
<div class="a" style="left:181px;top:397.79px;width:8.500px;height:7.500px;border:1px solid #b5b5b5;background:#fff"></div>
<div class="a" style="left:183px;top:398.29px;width:2.600px;height:6.500px;background:#1593b5"></div>
<div class="t" style="left:193.2px;top:397.29px"><span style="font-size:7.7px">rpm = 5762.904923302029</span></div>
<div class="a" style="left:181px;top:408.06px;width:8.500px;height:7.500px;border:1px solid #b5b5b5;background:#fff"></div>
<div class="a" style="left:183px;top:408.56px;width:2.600px;height:6.500px;background:#1593b5"></div>
<div class="t" style="left:193.2px;top:407.56px"><span style="font-size:7.7px">rpm = 5746.704298943211</span></div>
<div class="a" style="left:181px;top:418.33px;width:8.500px;height:7.500px;border:1px solid #b5b5b5;background:#fff"></div>
<div class="a" style="left:183px;top:418.83px;width:2.600px;height:6.500px;background:#1593b5"></div>
<div class="t" style="left:193.2px;top:417.83px"><span style="font-size:7.7px">rpm = 5730.036323848671</span></div>
<div class="a" style="left:181px;top:428.6px;width:8.500px;height:7.500px;border:1px solid #b5b5b5;background:#fff"></div>
<div class="a" style="left:183px;top:429.1px;width:2.600px;height:6.500px;background:#1593b5"></div>
<div class="t" style="left:193.2px;top:428.1px"><span style="font-size:7.7px">rpm = 5713.3197214513775</span></div>
<div class="a" style="left:181px;top:438.87px;width:8.500px;height:7.500px;border:1px solid #b5b5b5;background:#fff"></div>
<div class="a" style="left:183px;top:439.37px;width:2.600px;height:6.500px;background:#1593b5"></div>
<div class="t" style="left:193.2px;top:438.37px"><span style="font-size:7.7px">rpm = 5696.411006349038</span></div>
<div class="a" style="left:181px;top:449.14px;width:8.500px;height:7.500px;border:1px solid #b5b5b5;background:#fff"></div>
<div class="a" style="left:183px;top:449.64px;width:2.600px;height:6.500px;background:#1593b5"></div>
<div class="t" style="left:193.2px;top:448.64px"><span style="font-size:7.7px">rpm = 5679.035271946511</span></div>
<div class="a" style="left:181px;top:459.41px;width:8.500px;height:7.500px;border:1px solid #b5b5b5;background:#fff"></div>
<div class="a" style="left:183px;top:459.91px;width:2.600px;height:6.500px;background:#1593b5"></div>
<div class="t" style="left:193.2px;top:458.91px"><span style="font-size:7.7px">rpm = 5661.606211101812</span></div>
<div class="a" style="left:181px;top:469.68px;width:8.500px;height:7.500px;border:1px solid #b5b5b5;background:#fff"></div>
<div class="a" style="left:183px;top:470.18px;width:2.600px;height:6.500px;background:#1593b5"></div>
<div class="t" style="left:193.2px;top:469.18px"><span style="font-size:7.7px">rpm = 5643.974151239069</span></div>
<div class="a" style="left:181px;top:479.95px;width:8.500px;height:7.500px;border:1px solid #b5b5b5;background:#fff"></div>
<div class="a" style="left:183px;top:480.45px;width:2.600px;height:6.500px;background:#1593b5"></div>
<div class="t" style="left:193.2px;top:479.45px"><span style="font-size:7.7px">rpm = 5625.890439690759</span></div>
<div class="a" style="left:181px;top:490.22px;width:8.500px;height:7.500px;border:1px solid #b5b5b5;background:#fff"></div>
<div class="a" style="left:183px;top:490.72px;width:2.600px;height:6.500px;background:#1593b5"></div>
<div class="t" style="left:193.2px;top:489.72px"><span style="font-size:7.7px">rpm = 5607.748413223244</span></div>
<div class="a" style="left:143px;top:499px;width:182px;height:108px;background:#fff;border:1px solid #bdbdbd"></div>
<div class="t" style="left:145.200px;top:500.2px">名称</div>
<div class="t" style="left:197px;top:500.2px">信号处理<span style="font-size:7.7px">-</span>阶次跟踪<span style="font-size:7.7px">-OrderTrackresult</span></div>
<div class="a" style="left:144px;top:509.1px;width:180px;height:1px;background:#e4e4e4"></div>
<div class="t" style="left:145.200px;top:510.48px"><span style="font-size:7.7px">UUID</span></div>
<div class="t" style="left:197px;top:510.48px"><span style="font-size:7.7px">2303a860-883b-463f-bab1-a57702...</span></div>
<div class="a" style="left:144px;top:519.38px;width:180px;height:1px;background:#e4e4e4"></div>
<div class="t" style="left:145.200px;top:520.76px">对象类别</div>
<div class="t" style="left:197px;top:520.76px"><span style="font-size:7.7px">DatHdfFile</span></div>
<div class="a" style="left:144px;top:529.66px;width:180px;height:1px;background:#e4e4e4"></div>
<div class="t" style="left:145.200px;top:531.04px">行数</div>
<div class="t" style="left:197px;top:531.04px"><span style="font-size:7.7px">121</span></div>
<div class="a" style="left:144px;top:539.94px;width:180px;height:1px;background:#e4e4e4"></div>
<div class="t" style="left:145.200px;top:541.32px">列数</div>
<div class="t" style="left:197px;top:541.32px"><span style="font-size:7.7px">166</span></div>
<div class="a" style="left:144px;top:550.22px;width:180px;height:1px;background:#e4e4e4"></div>
<div class="t" style="left:145.200px;top:551.6px">类型</div>
<div class="t" style="left:197px;top:551.6px"><span style="font-size:7.7px">hdf_chanset</span></div>
<div class="a" style="left:144px;top:560.5px;width:180px;height:1px;background:#e4e4e4"></div>
<div class="t" style="left:145.200px;top:561.88px"><span style="font-size:7.7px">HDF</span>内部路径</div>
<div class="t" style="left:197px;top:561.88px"><span style="font-size:7.7px">/</span>信号处理<span style="font-size:7.7px">-</span>阶次跟踪<span style="font-size:7.7px">-OrderTrackresult</span></div>
<div class="a" style="left:144px;top:570.78px;width:180px;height:1px;background:#e4e4e4"></div>
<div class="t" style="left:145.200px;top:572.16px">是否生成<span style="font-size:7.7px">LOD</span></div>
<div class="t" style="left:197px;top:572.16px">是</div>
<div class="a" style="left:144px;top:581.06px;width:180px;height:1px;background:#e4e4e4"></div>
<div class="t" style="left:145.200px;top:582.44px">位置</div>
<div class="t" style="left:197px;top:582.44px"><span style="font-size:7.7px">R:/TEMP/rainfe/dataLab/prj/2022-...</span></div>
<div class="a" style="left:144px;top:591.34px;width:180px;height:1px;background:#e4e4e4"></div>
<div class="a" style="left:194.300px;top:500px;width:1px;height:92px;background:#e4e4e4"></div>
<div class="a" style="left:143px;top:609px;width:183px;height:11px;background:#fff"></div>
<div class="a" style="left:151.300px;top:615px;width:1px;height:5px;background:#222"></div>
<div class="a" style="left:155px;top:617px;width:165px;height:1px;background:#ececec"></div>
<div class="a" style="left:331px;top:93.5px;width:739px;height:441px;background:#acacac"></div>
<div class="a" style="left:333px;top:95px;width:364.5px;height:136px;background:#fff"></div>
<div class="a" style="left:702px;top:95px;width:364.5px;height:136px;background:#fff"></div>
<div class="a" style="left:333px;top:231px;width:364.5px;height:15.2px;background:#fff;border-top:1px solid #c4c4c4"></div>
<div class="a" style="left:702px;top:231px;width:364.5px;height:15.2px;background:#fff;border-top:1px solid #c4c4c4"></div>
<div class="a" style="left:1067px;top:93.5px;width:3px;height:441px;background:#f0f0f0"></div>
<div class="a" style="left:330px;top:93.5px;width:2.5px;height:441px;background:#f0f0f0"></div>
<div class="a" style="left:368.5px;top:132.2px;width:1px;height:74.2px;background:#e6e6e6"></div><div class="a" style="left:369px;top:131.7px;width:305px;height:1px;background:#e6e6e6"></div><div class="a" style="left:444.75px;top:132.2px;width:1px;height:74.2px;background:#e6e6e6"></div><div class="a" style="left:369px;top:150.25px;width:305px;height:1px;background:#e6e6e6"></div><div class="a" style="left:521px;top:132.2px;width:1px;height:74.2px;background:#e6e6e6"></div><div class="a" style="left:369px;top:168.8px;width:305px;height:1px;background:#e6e6e6"></div><div class="a" style="left:597.25px;top:132.2px;width:1px;height:74.2px;background:#e6e6e6"></div><div class="a" style="left:369px;top:187.35px;width:305px;height:1px;background:#e6e6e6"></div><div class="a" style="left:673.5px;top:132.2px;width:1px;height:74.2px;background:#e6e6e6"></div><div class="a" style="left:369px;top:205.9px;width:305px;height:1px;background:#e6e6e6"></div>
<div class="t" style="font-family:'Liberation Serif','Noto Serif CJK SC',serif;left:326.7px;top:127px;width:40px;text-align:right;font-size:7px;color:#333"><span style="display:inline-block;width:3.5px;text-align:center">2</span><span style="display:inline-block;width:3.5px;text-align:center">.</span><span style="display:inline-block;width:3.5px;text-align:center">4</span></div>
<div class="t" style="font-family:'Liberation Serif','Noto Serif CJK SC',serif;left:326.7px;top:145.55px;width:40px;text-align:right;font-size:7px;color:#333"><span style="display:inline-block;width:3.5px;text-align:center">1</span><span style="display:inline-block;width:3.5px;text-align:center">.</span><span style="display:inline-block;width:3.5px;text-align:center">2</span></div>
<div class="t" style="font-family:'Liberation Serif','Noto Serif CJK SC',serif;left:326.7px;top:164.1px;width:40px;text-align:right;font-size:7px;color:#333"><span style="display:inline-block;width:3.5px;text-align:center">0</span><span style="display:inline-block;width:3.5px;text-align:center">.</span><span style="display:inline-block;width:3.5px;text-align:center">0</span></div>
<div class="t" style="font-family:'Liberation Serif','Noto Serif CJK SC',serif;left:326.7px;top:182.65px;width:40px;text-align:right;font-size:7px;color:#333"><span style="display:inline-block;width:3.5px;text-align:center">-</span><span style="display:inline-block;width:3.5px;text-align:center">1</span><span style="display:inline-block;width:3.5px;text-align:center">.</span><span style="display:inline-block;width:3.5px;text-align:center">1</span></div>
<div class="t" style="font-family:'Liberation Serif','Noto Serif CJK SC',serif;left:326.7px;top:201.2px;width:40px;text-align:right;font-size:7px;color:#333"><span style="display:inline-block;width:3.5px;text-align:center">-</span><span style="display:inline-block;width:3.5px;text-align:center">2</span><span style="display:inline-block;width:3.5px;text-align:center">.</span><span style="display:inline-block;width:3.5px;text-align:center">3</span></div>
<div class="t" style="font-family:'Liberation Serif','Noto Serif CJK SC',serif;left:355px;top:207px;width:30px;text-align:center;font-size:7px;color:#333"><span style="display:inline-block;width:3.5px;text-align:center">0</span><span style="display:inline-block;width:3.5px;text-align:center">.</span><span style="display:inline-block;width:3.5px;text-align:center">0</span></div>
<div class="t" style="font-family:'Liberation Serif','Noto Serif CJK SC',serif;left:431.25px;top:207px;width:30px;text-align:center;font-size:7px;color:#333"><span style="display:inline-block;width:3.5px;text-align:center">4</span><span style="display:inline-block;width:3.5px;text-align:center">.</span><span style="display:inline-block;width:3.5px;text-align:center">7</span></div>
<div class="t" style="font-family:'Liberation Serif','Noto Serif CJK SC',serif;left:507.5px;top:207px;width:30px;text-align:center;font-size:7px;color:#333"><span style="display:inline-block;width:3.5px;text-align:center">9</span><span style="display:inline-block;width:3.5px;text-align:center">.</span><span style="display:inline-block;width:3.5px;text-align:center">5</span></div>
<div class="t" style="font-family:'Liberation Serif','Noto Serif CJK SC',serif;left:583.75px;top:207px;width:30px;text-align:center;font-size:7px;color:#333"><span style="display:inline-block;width:3.5px;text-align:center">1</span><span style="display:inline-block;width:3.5px;text-align:center">4</span><span style="display:inline-block;width:3.5px;text-align:center">.</span><span style="display:inline-block;width:3.5px;text-align:center">2</span></div>
<div class="t" style="font-family:'Liberation Serif','Noto Serif CJK SC',serif;left:660px;top:207px;width:30px;text-align:center;font-size:7px;color:#333"><span style="display:inline-block;width:3.5px;text-align:center">1</span><span style="display:inline-block;width:3.5px;text-align:center">9</span><span style="display:inline-block;width:3.5px;text-align:center">.</span><span style="display:inline-block;width:3.5px;text-align:center">0</span></div>
<div class="a" style="left:489.8px;top:116.700px;width:4.600px;height:4.400px;background:#18a8f4;border:1px solid #1b4f8a;border-radius:1px"></div>
<div class="t" style="font-family:'Liberation Serif','Noto Serif CJK SC',serif;left:496.6px;top:113.4px;font-size:7px;color:#333"><span style="display:inline-block;width:3.56px;text-align:center">V</span><span style="display:inline-block;width:3.56px;text-align:center">i</span><span style="display:inline-block;width:3.56px;text-align:center">b</span><span style="display:inline-block;width:3.56px;text-align:center">r</span><span style="display:inline-block;width:3.56px;text-align:center">a</span><span style="display:inline-block;width:3.56px;text-align:center">t</span><span style="display:inline-block;width:3.56px;text-align:center">i</span><span style="display:inline-block;width:3.56px;text-align:center">o</span><span style="display:inline-block;width:3.56px;text-align:center">n</span></div>
<div class="a" style="left:744.5px;top:132.2px;width:1px;height:74.2px;background:#e6e6e6"></div><div class="a" style="left:745px;top:131.7px;width:296px;height:1px;background:#e6e6e6"></div><div class="a" style="left:818.5px;top:132.2px;width:1px;height:74.2px;background:#e6e6e6"></div><div class="a" style="left:745px;top:150.25px;width:296px;height:1px;background:#e6e6e6"></div><div class="a" style="left:892.5px;top:132.2px;width:1px;height:74.2px;background:#e6e6e6"></div><div class="a" style="left:745px;top:168.8px;width:296px;height:1px;background:#e6e6e6"></div><div class="a" style="left:966.5px;top:132.2px;width:1px;height:74.2px;background:#e6e6e6"></div><div class="a" style="left:745px;top:187.35px;width:296px;height:1px;background:#e6e6e6"></div><div class="a" style="left:1040.5px;top:132.2px;width:1px;height:74.2px;background:#e6e6e6"></div><div class="a" style="left:745px;top:205.9px;width:296px;height:1px;background:#e6e6e6"></div>
<div class="t" style="font-family:'Liberation Serif','Noto Serif CJK SC',serif;left:702.7px;top:127px;width:40px;text-align:right;font-size:7px;color:#333"><span style="display:inline-block;width:3.5px;text-align:center">6</span><span style="display:inline-block;width:3.5px;text-align:center">1</span><span style="display:inline-block;width:3.5px;text-align:center">1</span><span style="display:inline-block;width:3.5px;text-align:center">2</span><span style="display:inline-block;width:3.5px;text-align:center">.</span><span style="display:inline-block;width:3.5px;text-align:center">3</span></div>
<div class="t" style="font-family:'Liberation Serif','Noto Serif CJK SC',serif;left:702.7px;top:145.55px;width:40px;text-align:right;font-size:7px;color:#333"><span style="display:inline-block;width:3.5px;text-align:center">4</span><span style="display:inline-block;width:3.5px;text-align:center">8</span><span style="display:inline-block;width:3.5px;text-align:center">0</span><span style="display:inline-block;width:3.5px;text-align:center">5</span><span style="display:inline-block;width:3.5px;text-align:center">.</span><span style="display:inline-block;width:3.5px;text-align:center">8</span></div>
<div class="t" style="font-family:'Liberation Serif','Noto Serif CJK SC',serif;left:702.7px;top:164.1px;width:40px;text-align:right;font-size:7px;color:#333"><span style="display:inline-block;width:3.5px;text-align:center">3</span><span style="display:inline-block;width:3.5px;text-align:center">4</span><span style="display:inline-block;width:3.5px;text-align:center">9</span><span style="display:inline-block;width:3.5px;text-align:center">9</span><span style="display:inline-block;width:3.5px;text-align:center">.</span><span style="display:inline-block;width:3.5px;text-align:center">3</span></div>
<div class="t" style="font-family:'Liberation Serif','Noto Serif CJK SC',serif;left:702.7px;top:182.65px;width:40px;text-align:right;font-size:7px;color:#333"><span style="display:inline-block;width:3.5px;text-align:center">2</span><span style="display:inline-block;width:3.5px;text-align:center">1</span><span style="display:inline-block;width:3.5px;text-align:center">9</span><span style="display:inline-block;width:3.5px;text-align:center">2</span><span style="display:inline-block;width:3.5px;text-align:center">.</span><span style="display:inline-block;width:3.5px;text-align:center">9</span></div>
<div class="t" style="font-family:'Liberation Serif','Noto Serif CJK SC',serif;left:702.7px;top:201.2px;width:40px;text-align:right;font-size:7px;color:#333"><span style="display:inline-block;width:3.5px;text-align:center">8</span><span style="display:inline-block;width:3.5px;text-align:center">8</span><span style="display:inline-block;width:3.5px;text-align:center">6</span><span style="display:inline-block;width:3.5px;text-align:center">.</span><span style="display:inline-block;width:3.5px;text-align:center">4</span></div>
<div class="t" style="font-family:'Liberation Serif','Noto Serif CJK SC',serif;left:731px;top:207px;width:30px;text-align:center;font-size:7px;color:#333"><span style="display:inline-block;width:3.5px;text-align:center">0</span><span style="display:inline-block;width:3.5px;text-align:center">.</span><span style="display:inline-block;width:3.5px;text-align:center">0</span></div>
<div class="t" style="font-family:'Liberation Serif','Noto Serif CJK SC',serif;left:805px;top:207px;width:30px;text-align:center;font-size:7px;color:#333"><span style="display:inline-block;width:3.5px;text-align:center">4</span><span style="display:inline-block;width:3.5px;text-align:center">.</span><span style="display:inline-block;width:3.5px;text-align:center">7</span></div>
<div class="t" style="font-family:'Liberation Serif','Noto Serif CJK SC',serif;left:879px;top:207px;width:30px;text-align:center;font-size:7px;color:#333"><span style="display:inline-block;width:3.5px;text-align:center">9</span><span style="display:inline-block;width:3.5px;text-align:center">.</span><span style="display:inline-block;width:3.5px;text-align:center">5</span></div>
<div class="t" style="font-family:'Liberation Serif','Noto Serif CJK SC',serif;left:953px;top:207px;width:30px;text-align:center;font-size:7px;color:#333"><span style="display:inline-block;width:3.5px;text-align:center">1</span><span style="display:inline-block;width:3.5px;text-align:center">4</span><span style="display:inline-block;width:3.5px;text-align:center">.</span><span style="display:inline-block;width:3.5px;text-align:center">2</span></div>
<div class="t" style="font-family:'Liberation Serif','Noto Serif CJK SC',serif;left:1027px;top:207px;width:30px;text-align:center;font-size:7px;color:#333"><span style="display:inline-block;width:3.5px;text-align:center">1</span><span style="display:inline-block;width:3.5px;text-align:center">9</span><span style="display:inline-block;width:3.5px;text-align:center">.</span><span style="display:inline-block;width:3.5px;text-align:center">0</span></div>
<div class="a" style="left:865.5px;top:116.700px;width:4.600px;height:4.400px;background:#18a8f4;border:1px solid #1b4f8a;border-radius:1px"></div>
<div class="t" style="font-family:'Liberation Serif','Noto Serif CJK SC',serif;left:872.3px;top:113.4px;font-size:7px;color:#333"><span style="display:inline-block;width:3.56px;text-align:center">T</span><span style="display:inline-block;width:3.56px;text-align:center">a</span><span style="display:inline-block;width:3.56px;text-align:center">c</span><span style="display:inline-block;width:3.56px;text-align:center">h</span><span style="display:inline-block;width:3.56px;text-align:center">o</span></div>
<svg class="a" style="left:0;top:0" width="1214" height="260" viewBox="0 0 1214 260"><polyline points="369.0,156.0 369.6,185.0 370.3,155.8 370.9,183.1 371.5,155.5 372.2,182.8 372.8,157.0 373.4,181.8 374.1,154.5 374.7,184.3 375.4,159.2 376.0,181.5 376.6,156.7 377.3,182.6 377.9,156.0 378.5,184.0 379.2,155.8 379.8,183.8 380.4,154.5 381.1,184.8 381.7,156.4 382.3,181.0 383.0,155.1 383.6,184.8 384.2,154.6 384.9,182.6 385.5,154.7 386.2,185.2 386.8,157.0 387.4,184.7 388.1,157.0 388.7,185.2 389.3,156.9 390.0,180.6 390.6,155.0 391.2,184.1 391.9,156.6 392.5,183.0 393.1,156.8 393.8,183.3 394.4,154.3 395.1,183.6 395.7,156.4 396.3,185.2 397.0,156.5 397.6,183.6 398.2,154.4 398.9,181.6 399.5,156.1 400.1,184.3 400.8,154.8 401.4,187.0 402.0,153.6 402.7,185.3 403.3,151.6 403.9,186.4 404.6,151.1 405.2,187.3 405.9,149.1 406.5,189.5 407.1,150.8 407.8,190.5 408.4,148.0 409.0,194.1 409.7,146.3 410.3,193.8 410.9,141.9 411.6,198.9 412.2,137.3 412.8,197.8 413.5,143.7 414.1,200.6 414.8,135.3 415.4,202.9 416.0,132.5 416.7,204.2 417.3,144.8 417.9,198.3 418.6,138.0 419.2,196.3 419.8,141.7 420.5,195.6 421.1,146.2 421.7,195.3 422.4,145.3 423.0,193.3 423.6,149.0 424.3,191.8 424.9,150.5 425.6,190.0 426.2,151.1 426.8,187.7 427.5,154.1 428.1,188.1 428.7,154.1 429.4,185.3 430.0,155.6 430.6,182.9 431.3,157.2 431.9,183.6 432.5,155.7 433.2,183.6 433.8,159.5 434.4,182.7 435.1,157.5 435.7,184.0 436.4,157.0 437.0,182.5 437.6,157.7 438.3,183.6 438.9,156.0 439.5,183.0 440.2,157.9 440.8,183.6 441.4,156.5 442.1,182.2 442.7,157.1 443.3,182.1 444.0,156.7 444.6,182.3 445.2,155.8 445.9,179.6 446.5,158.6 447.2,183.3 447.8,157.5 448.4,181.6 449.1,159.5 449.7,183.6 450.3,160.1 451.0,183.1 451.6,156.7 452.2,183.5 452.9,156.6 453.5,182.7 454.1,158.3 454.8,183.3 455.4,157.6 456.1,184.4 456.7,155.5 457.3,183.8 458.0,156.9 458.6,186.5 459.2,154.8 459.9,187.3 460.5,152.1 461.1,190.3 461.8,147.8 462.4,191.6 463.0,146.6 463.7,193.3 464.3,147.5 464.9,195.9 465.6,145.4 466.2,193.1 466.9,143.7 467.5,192.2 468.1,144.9 468.8,190.0 469.4,148.1 470.0,196.2 470.7,145.3 471.3,193.4 471.9,144.0 472.6,197.2 473.2,141.4 473.8,193.1 474.5,144.6 475.1,195.3 475.8,142.0 476.4,198.7 477.0,143.2 477.7,199.3 478.3,143.2 478.9,200.5 479.6,140.6 480.2,198.8 480.8,145.3 481.5,201.8 482.1,140.4 482.7,200.1 483.4,143.9 484.0,200.5 484.6,135.9 485.3,199.5 485.9,140.4 486.6,203.3 487.2,137.7 487.8,200.0 488.5,134.4 489.1,197.9 489.7,138.7 490.4,203.8 491.0,137.3 491.6,200.4 492.3,138.6 492.9,201.6 493.5,135.7 494.2,202.5 494.8,135.6 495.4,201.5 496.1,134.8 496.7,205.7 497.4,133.4 498.0,204.8 498.6,133.3 499.3,201.9 499.9,138.0 500.5,205.3 501.2,138.2 501.8,195.4 502.4,134.7 503.1,203.9 503.7,137.9 504.3,198.7 505.0,136.7 505.6,204.0 506.2,138.3 506.9,200.6 507.5,146.1 508.2,192.8 508.8,139.2 509.4,199.9 510.1,141.9 510.7,200.8 511.3,144.0 512.0,195.9 512.6,141.5 513.2,196.8 513.9,141.8 514.5,192.8 515.1,141.3 515.8,195.1 516.4,141.6 517.1,194.7 517.7,148.1 518.3,197.7 519.0,142.8 519.6,196.0 520.2,143.7 520.9,197.3 521.5,145.8 522.1,195.8 522.8,143.4 523.4,196.2 524.0,144.4 524.7,195.0 525.3,149.5 525.9,192.3 526.6,149.1 527.2,192.7 527.9,149.1 528.5,191.6 529.1,148.5 529.8,189.9 530.4,148.4 531.0,189.4 531.7,153.5 532.3,187.9 532.9,153.5 533.6,185.0 534.2,157.1 534.8,184.6 535.5,154.7 536.1,185.6 536.8,154.5 537.4,181.7 538.0,156.4 538.7,181.7 539.3,158.0 539.9,181.7 540.6,159.5 541.2,183.2 541.8,157.8 542.5,181.5 543.1,157.7 543.7,181.1 544.4,160.8 545.0,179.0 545.6,159.1 546.3,181.2 546.9,160.0 547.6,182.5 548.2,159.4 548.8,181.3 549.5,157.4 550.1,181.4 550.7,158.0 551.4,182.4 552.0,158.3 552.6,181.6 553.3,161.1 553.9,181.4 554.5,158.7 555.2,181.2 555.8,158.4 556.4,181.8 557.1,157.5 557.7,181.7 558.4,159.5 559.0,181.8 559.6,159.0 560.3,181.6 560.9,158.5 561.5,181.7 562.2,159.3 562.8,182.0 563.4,161.6 564.1,180.6 564.7,158.5 565.3,179.1 566.0,159.7 566.6,181.1 567.2,159.1 567.9,180.4 568.5,158.3 569.2,180.1 569.8,158.2 570.4,181.5 571.1,159.1 571.7,181.6 572.3,158.6 573.0,180.5 573.6,158.5 574.2,180.7 574.9,159.9 575.5,178.2 576.1,158.9 576.8,181.2 577.4,160.6 578.1,180.2 578.7,160.0 579.3,181.2 580.0,159.6 580.6,180.4 581.2,159.4 581.9,181.1 582.5,158.3 583.1,181.5 583.8,158.6 584.4,180.2 585.0,158.3 585.7,180.1 586.3,159.6 586.9,180.4 587.6,159.9 588.2,181.1 588.9,158.6 589.5,179.9 590.1,158.6 590.8,179.5 591.4,159.3 592.0,181.4 592.7,160.8 593.3,180.5 593.9,162.1 594.6,180.9 595.2,160.3 595.8,179.7 596.5,159.2 597.1,179.8 597.8,159.5 598.4,180.1 599.0,158.6 599.7,180.3 600.3,159.1 600.9,181.1 601.6,159.0 602.2,180.9 602.8,159.0 603.5,181.1 604.1,159.6 604.7,180.8 605.4,159.9 606.0,180.6 606.6,160.0 607.3,179.5 607.9,160.2 608.6,179.2 609.2,160.6 609.8,180.6 610.5,160.7 611.1,180.2 611.7,160.8 612.4,179.4 613.0,160.4 613.6,180.2 614.3,160.5 614.9,179.3 615.5,160.3 616.2,180.5 616.8,160.4 617.4,180.7 618.1,159.9 618.7,179.8 619.4,160.9 620.0,180.4 620.6,160.0 621.3,179.4 621.9,159.8 622.5,178.9 623.2,160.4 623.8,180.1 624.4,160.8 625.1,179.4 625.7,159.5 626.3,179.9 627.0,160.7 627.6,179.0 628.2,161.2 628.9,180.3 629.5,161.1 630.2,178.2 630.8,160.3 631.4,180.4 632.1,159.6 632.7,180.1 633.3,161.5 634.0,180.1 634.6,160.3 635.2,178.9 635.9,160.8 636.5,178.7 637.1,160.5 637.8,179.2 638.4,161.2 639.1,179.3 639.7,159.9 640.3,178.5 641.0,160.1 641.6,179.5 642.2,161.5 642.9,179.9 643.5,160.4 644.1,179.1 644.8,161.0 645.4,179.1 646.0,161.1 646.7,179.7 647.3,159.9 647.9,179.6 648.6,161.9 649.2,177.0 649.9,160.4 650.5,178.6 651.1,160.1 651.8,178.4 652.4,161.4 653.0,177.3 653.7,160.1 654.3,179.1 654.9,160.4 655.6,178.8 656.2,162.7 656.8,178.8 657.5,160.0 658.1,179.3 658.8,161.8 659.4,178.7 660.0,161.7 660.7,178.9 661.3,160.4 661.9,178.3 662.6,160.3 663.2,178.6 663.8,161.7 664.5,179.7 665.1,160.7 665.7,178.3 666.4,160.9 667.0,178.1 667.6,161.0 668.3,178.5 668.9,161.4 669.6,178.1 670.2,161.8 670.8,178.8 671.5,161.1 672.1,179.4 672.7,160.7 673.4,178.0 674.0,161.6" fill="none" stroke="#1f9fe2" stroke-width="1" stroke-linejoin="round"/>
<path d="M745.0 132.2 C746.0 132.4 749.1 133.0 751.2 133.3 C753.2 133.7 755.3 134.1 757.3 134.5 C759.4 134.9 761.4 135.3 763.5 135.7 C765.6 136.2 767.6 136.6 769.7 137.1 C771.7 137.6 773.8 138.0 775.8 138.6 C777.9 139.1 779.9 139.6 782.0 140.2 C784.1 140.8 786.1 141.4 788.2 142.1 C790.2 142.7 792.3 143.4 794.3 144.1 C796.4 144.8 798.4 145.5 800.5 146.2 C802.6 146.9 804.6 147.7 806.7 148.4 C808.7 149.1 810.8 149.9 812.8 150.6 C814.9 151.4 816.9 152.1 819.0 152.8 C821.1 153.6 823.1 154.3 825.2 155.0 C827.2 155.7 829.3 156.4 831.3 157.1 C833.4 157.8 835.4 158.5 837.5 159.2 C839.6 159.8 841.6 160.5 843.7 161.2 C845.7 161.9 847.8 162.5 849.8 163.2 C851.9 163.8 853.9 164.5 856.0 165.1 C858.1 165.8 860.1 166.4 862.2 167.1 C864.2 167.7 866.3 168.4 868.3 169.0 C870.4 169.7 872.4 170.3 874.5 170.9 C876.6 171.6 878.6 172.2 880.7 172.8 C882.7 173.4 884.8 174.0 886.8 174.6 C888.9 175.2 890.9 175.8 893.0 176.3 C895.1 176.9 897.1 177.5 899.2 178.0 C901.2 178.6 903.3 179.2 905.3 179.7 C907.4 180.2 909.4 180.8 911.5 181.3 C913.6 181.8 915.6 182.3 917.7 182.8 C919.7 183.3 921.8 183.8 923.8 184.3 C925.9 184.8 927.9 185.3 930.0 185.8 C932.1 186.3 934.1 186.7 936.2 187.2 C938.2 187.7 940.3 188.1 942.3 188.6 C944.4 189.0 946.4 189.5 948.5 189.9 C950.6 190.4 952.6 190.8 954.7 191.2 C956.7 191.6 958.8 192.1 960.8 192.5 C962.9 192.9 964.9 193.3 967.0 193.6 C969.1 194.0 971.1 194.4 973.2 194.8 C975.2 195.1 977.3 195.5 979.3 195.8 C981.4 196.2 983.4 196.5 985.5 196.8 C987.6 197.2 989.6 197.5 991.7 197.8 C993.7 198.2 995.8 198.5 997.8 198.9 C999.9 199.2 1001.9 199.5 1004.0 199.9 C1006.1 200.2 1008.1 200.6 1010.2 200.9 C1012.2 201.3 1014.3 201.6 1016.3 202.0 C1018.4 202.3 1020.4 202.7 1022.5 203.1 C1024.6 203.4 1026.6 203.8 1028.7 204.2 C1030.7 204.5 1032.8 204.9 1034.8 205.3 C1036.9 205.7 1040.0 206.2 1041.0 206.4" fill="none" stroke="#1f9fe2" stroke-width="1.3"/></svg>
<div class="a" style="left:334px;top:232px;width:16.800px;height:14px;background:#e7e7e7;border:1px solid #a8a8a8"></div>
<div class="a" style="left:352px;top:232px;width:16.800px;height:14px;background:#e7e7e7;border:1px solid #a8a8a8"></div>
<div class="a" style="left:370px;top:232px;width:16.800px;height:14px;background:#e7e7e7;border:1px solid #a8a8a8"></div>
<div class="a" style="left:388px;top:232px;width:16.800px;height:14px;background:#e7e7e7;border:1px solid #a8a8a8"></div>
<svg class="a" style="left:334px;top:232px" width="72" height="14" viewBox="0 0 72 14"><path d="M5 2.600v8.400l2.200-1.900 1.400 2.900 1.400-.7-1.400-2.800 2.800-.2z" fill="#fff" stroke="#333" stroke-width=".9"/><path d="M20.500 7h12M23.300 2.800v8.400M26.500 2.800v8.400M29.700 2.800v8.400" stroke="#222" stroke-width="1.050" fill="none"/><path d="M39.500 9l6.500-5.800 2.800 3-6.500 5.800z M40.900 10.500l6.500-5.800" fill="none" stroke="#222" stroke-width="1.050"/><path d="M56.500 7h12M62.500 2.500v9" stroke="#222" stroke-width="1.050"/><circle cx="62.500" cy="7" r="1.500" fill="#222"/></svg>
<div class="t" style="font-family:'Liberation Serif','Noto Serif CJK SC',serif;left:619.5px;top:234px;font-size:7px;font-weight:bold;color:#222"><span style="display:inline-block;width:7px;text-align:center">屏</span><span style="display:inline-block;width:7px;text-align:center">幕</span><span style="display:inline-block;width:7px;text-align:center">坐</span><span style="display:inline-block;width:7px;text-align:center">标</span><span style="display:inline-block;width:3.5px;text-align:center">:</span><span style="display:inline-block;width:3.5px"> </span><span style="font-weight:normal"><span style="display:inline-block;width:7px;text-align:center">（</span><span style="display:inline-block;width:3.5px;text-align:center">4</span><span style="display:inline-block;width:3.5px;text-align:center">0</span><span style="display:inline-block;width:3.5px;text-align:center">7</span><span style="display:inline-block;width:3.5px;text-align:center">,</span><span style="display:inline-block;width:3.5px;text-align:center">2</span><span style="display:inline-block;width:3.5px;text-align:center">7</span><span style="display:inline-block;width:3.5px;text-align:center">7</span><span style="display:inline-block;width:7px;text-align:center">）</span></span></div>
<div class="a" style="left:703px;top:232px;width:16.800px;height:14px;background:#e7e7e7;border:1px solid #a8a8a8"></div>
<div class="a" style="left:721px;top:232px;width:16.800px;height:14px;background:#e7e7e7;border:1px solid #a8a8a8"></div>
<div class="a" style="left:739px;top:232px;width:16.800px;height:14px;background:#e7e7e7;border:1px solid #a8a8a8"></div>
<div class="a" style="left:757px;top:232px;width:16.800px;height:14px;background:#e7e7e7;border:1px solid #a8a8a8"></div>
<svg class="a" style="left:703px;top:232px" width="72" height="14" viewBox="0 0 72 14"><path d="M5 2.600v8.400l2.200-1.900 1.400 2.900 1.400-.7-1.400-2.800 2.800-.2z" fill="#fff" stroke="#333" stroke-width=".9"/><path d="M20.500 7h12M23.300 2.800v8.400M26.500 2.800v8.400M29.700 2.800v8.400" stroke="#222" stroke-width="1.050" fill="none"/><path d="M39.500 9l6.500-5.800 2.800 3-6.500 5.800z M40.900 10.500l6.500-5.800" fill="none" stroke="#222" stroke-width="1.050"/><path d="M56.500 7h12M62.500 2.500v9" stroke="#222" stroke-width="1.050"/><circle cx="62.500" cy="7" r="1.500" fill="#222"/></svg>
<div class="t" style="font-family:'Liberation Serif','Noto Serif CJK SC',serif;left:991.5px;top:234px;font-size:7px;font-weight:bold;color:#222"><span style="display:inline-block;width:7px;text-align:center">屏</span><span style="display:inline-block;width:7px;text-align:center">幕</span><span style="display:inline-block;width:7px;text-align:center">坐</span><span style="display:inline-block;width:7px;text-align:center">标</span><span style="display:inline-block;width:3.5px;text-align:center">:</span><span style="display:inline-block;width:3.5px"> </span><span style="font-weight:normal"><span style="display:inline-block;width:7px;text-align:center">（</span><span style="display:inline-block;width:3.5px;text-align:center">1</span><span style="display:inline-block;width:3.5px;text-align:center">5</span><span style="display:inline-block;width:3.5px;text-align:center">2</span><span style="display:inline-block;width:3.5px;text-align:center">,</span><span style="display:inline-block;width:3.5px;text-align:center">2</span><span style="display:inline-block;width:3.5px;text-align:center">8</span><span style="display:inline-block;width:7px;text-align:center">）</span></span></div>
<div class="a" style="left:333.5px;top:249px;width:733px;height:282.5px;background:#fff"></div>
<div class="a" style="left:427px;top:268px;width:9px;height:1px;background:repeating-linear-gradient(90deg,#bbb 0 1px,transparent 1px 3px)"></div>
<div class="a" style="left:427px;top:278.2px;width:9px;height:1px;background:repeating-linear-gradient(90deg,#bbb 0 1px,transparent 1px 3px)"></div>
<div class="a" style="left:427px;top:288.4px;width:9px;height:1px;background:repeating-linear-gradient(90deg,#bbb 0 1px,transparent 1px 3px)"></div>
<div class="a" style="left:427px;top:298.6px;width:9px;height:1px;background:repeating-linear-gradient(90deg,#bbb 0 1px,transparent 1px 3px)"></div>
<div class="a" style="left:427px;top:308.8px;width:9px;height:1px;background:repeating-linear-gradient(90deg,#bbb 0 1px,transparent 1px 3px)"></div>
<div class="a" style="left:427px;top:319px;width:9px;height:1px;background:repeating-linear-gradient(90deg,#bbb 0 1px,transparent 1px 3px)"></div>
<div class="a" style="left:427px;top:329.2px;width:9px;height:1px;background:repeating-linear-gradient(90deg,#bbb 0 1px,transparent 1px 3px)"></div>
<div class="a" style="left:427px;top:339.4px;width:9px;height:1px;background:repeating-linear-gradient(90deg,#bbb 0 1px,transparent 1px 3px)"></div>
<div class="a" style="left:427px;top:349.6px;width:9px;height:1px;background:repeating-linear-gradient(90deg,#bbb 0 1px,transparent 1px 3px)"></div>
<div class="a" style="left:427px;top:359.8px;width:9px;height:1px;background:repeating-linear-gradient(90deg,#bbb 0 1px,transparent 1px 3px)"></div>
<div class="a" style="left:427px;top:370px;width:9px;height:1px;background:repeating-linear-gradient(90deg,#bbb 0 1px,transparent 1px 3px)"></div>
<div class="a" style="left:427px;top:380.2px;width:9px;height:1px;background:repeating-linear-gradient(90deg,#bbb 0 1px,transparent 1px 3px)"></div>
<div class="a" style="left:427px;top:390.4px;width:9px;height:1px;background:repeating-linear-gradient(90deg,#bbb 0 1px,transparent 1px 3px)"></div>
<div class="a" style="left:427px;top:400.6px;width:9px;height:1px;background:repeating-linear-gradient(90deg,#bbb 0 1px,transparent 1px 3px)"></div>
<div class="a" style="left:427px;top:410.8px;width:9px;height:1px;background:repeating-linear-gradient(90deg,#bbb 0 1px,transparent 1px 3px)"></div>
<div class="a" style="left:427px;top:421px;width:9px;height:1px;background:repeating-linear-gradient(90deg,#bbb 0 1px,transparent 1px 3px)"></div>
<div class="a" style="left:427px;top:431.2px;width:9px;height:1px;background:repeating-linear-gradient(90deg,#bbb 0 1px,transparent 1px 3px)"></div>
<div class="a" style="left:427px;top:441.4px;width:9px;height:1px;background:repeating-linear-gradient(90deg,#bbb 0 1px,transparent 1px 3px)"></div>
<div class="a" style="left:427px;top:451.6px;width:9px;height:1px;background:repeating-linear-gradient(90deg,#bbb 0 1px,transparent 1px 3px)"></div>
<div class="a" style="left:427px;top:461.8px;width:9px;height:1px;background:repeating-linear-gradient(90deg,#bbb 0 1px,transparent 1px 3px)"></div>
<div class="a" style="left:427px;top:472px;width:9px;height:1px;background:repeating-linear-gradient(90deg,#bbb 0 1px,transparent 1px 3px)"></div>
<div class="a" style="left:427px;top:482.2px;width:9px;height:1px;background:repeating-linear-gradient(90deg,#bbb 0 1px,transparent 1px 3px)"></div>
<div class="a" style="left:427px;top:492.4px;width:9px;height:1px;background:repeating-linear-gradient(90deg,#bbb 0 1px,transparent 1px 3px)"></div>
<div class="a" style="left:427px;top:502.6px;width:9px;height:1px;background:repeating-linear-gradient(90deg,#bbb 0 1px,transparent 1px 3px)"></div>
<svg class="a" style="left:440px;top:264px" width="570" height="243" viewBox="0 0 570 243"><defs><filter id="b1" filterUnits="userSpaceOnUse" x="-100" y="-100" width="800" height="450"><feGaussianBlur stdDeviation="1.1"/></filter><filter id="b2" filterUnits="userSpaceOnUse" x="-100" y="-100" width="800" height="450"><feGaussianBlur stdDeviation="1.8"/></filter><filter id="b3" filterUnits="userSpaceOnUse" x="-100" y="-100" width="800" height="450"><feGaussianBlur stdDeviation="3"/></filter><filter id="b5" filterUnits="userSpaceOnUse" x="-100" y="-100" width="800" height="450"><feGaussianBlur stdDeviation="5"/></filter><filter id="b8" filterUnits="userSpaceOnUse" x="-100" y="-100" width="800" height="450"><feGaussianBlur stdDeviation="11"/></filter><linearGradient id="cb" x1="0" y1="0" x2="0" y2="1"><stop offset="0" stop-color="#8c1414"/><stop offset="0.1" stop-color="#e01010"/><stop offset="0.2" stop-color="#ff4a00"/><stop offset="0.3" stop-color="#ffa000"/><stop offset="0.38" stop-color="#fff000"/><stop offset="0.5" stop-color="#9cff60"/><stop offset="0.62" stop-color="#18f0f0"/><stop offset="0.72" stop-color="#10a0ff"/><stop offset="0.85" stop-color="#1040ff"/><stop offset="0.95" stop-color="#1020c8"/><stop offset="1" stop-color="#0c0c9c"/></linearGradient><pattern id="vs" width="9.19" height="10" patternUnits="userSpaceOnUse"><rect x="0" y="0" width=".55" height="10" fill="#8c8cff" opacity=".42"/><rect x="4.6" y="0" width=".5" height="10" fill="#8080ff" opacity=".3"/></pattern><clipPath id="hc"><rect x="0" y="0" width="556" height="242"/></clipPath></defs><rect x="0" y="0" width="556" height="242" fill="#0808b6"/><g clip-path="url(#hc)"><ellipse cx="40" cy="30" rx="70" ry="30" fill="#060698" opacity="0.8" filter="url(#b8)"/><ellipse cx="330" cy="180" rx="50" ry="60" fill="#050594" opacity="0.7" filter="url(#b8)"/><ellipse cx="420" cy="70" rx="50" ry="40" fill="#050594" opacity="0.8" filter="url(#b8)"/><ellipse cx="290" cy="120" rx="25" ry="50" fill="#050594" opacity="0.7" filter="url(#b8)"/><ellipse cx="140" cy="60" rx="50" ry="30" fill="#060698" opacity="0.6" filter="url(#b8)"/><ellipse cx="530" cy="120" rx="30" ry="80" fill="#060698" opacity="0.6" filter="url(#b8)"/><ellipse cx="150" cy="125" rx="60" ry="30" fill="#0c0ce6" opacity="0.6" filter="url(#b8)"/><ellipse cx="40" cy="170" rx="50" ry="40" fill="#0c0ce6" opacity="0.4" filter="url(#b8)"/><ellipse cx="250" cy="200" rx="30" ry="40" fill="#0c0ce6" opacity="0.5" filter="url(#b8)"/><ellipse cx="400" cy="200" rx="30" ry="40" fill="#0c0ce6" opacity="0.4" filter="url(#b8)"/><ellipse cx="520" cy="215" rx="40" ry="30" fill="#0c0ce6" opacity="0.5" filter="url(#b8)"/><ellipse cx="120" cy="215" rx="30" ry="20" fill="#0c0ce6" opacity="0.4" filter="url(#b8)"/><rect x="301" y="59.3" width="95" height="2" fill="#050596" opacity="0.36" filter="url(#b1)"/><rect x="23" y="132.4" width="23" height="1.6" fill="#1818f0" opacity="0.38" filter="url(#b1)"/><rect x="506" y="236.9" width="79" height="1.6" fill="#1818f0" opacity="0.44" filter="url(#b1)"/><rect x="393" y="161.8" width="54" height="2" fill="#050596" opacity="0.48" filter="url(#b1)"/><rect x="-11" y="193.3" width="38" height="1.6" fill="#1818f0" opacity="0.51" filter="url(#b1)"/><rect x="196" y="36.0" width="71" height="1.6" fill="#1818f0" opacity="0.38" filter="url(#b1)"/><rect x="128" y="125.7" width="71" height="2" fill="#050596" opacity="0.40" filter="url(#b1)"/><rect x="1" y="154.7" width="80" height="1.6" fill="#1818f0" opacity="0.37" filter="url(#b1)"/><rect x="316" y="230.3" width="62" height="1.6" fill="#1818f0" opacity="0.49" filter="url(#b1)"/><rect x="366" y="150.5" width="88" height="2" fill="#050596" opacity="0.53" filter="url(#b1)"/><rect x="537" y="117.6" width="95" height="1.6" fill="#1818f0" opacity="0.68" filter="url(#b1)"/><rect x="223" y="99.3" width="71" height="1.6" fill="#1818f0" opacity="0.71" filter="url(#b1)"/><rect x="274" y="127.2" width="59" height="2" fill="#050596" opacity="0.57" filter="url(#b1)"/><rect x="11" y="78.3" width="85" height="1.6" fill="#1818f0" opacity="0.71" filter="url(#b1)"/><rect x="315" y="176.2" width="88" height="1.6" fill="#1818f0" opacity="0.44" filter="url(#b1)"/><rect x="19" y="143.2" width="31" height="2" fill="#050596" opacity="0.43" filter="url(#b1)"/><rect x="202" y="121.6" width="25" height="1.6" fill="#1818f0" opacity="0.61" filter="url(#b1)"/><rect x="114" y="127.2" width="48" height="1.6" fill="#1818f0" opacity="0.48" filter="url(#b1)"/><rect x="18" y="58.1" width="102" height="2" fill="#050596" opacity="0.59" filter="url(#b1)"/><rect x="465" y="160.4" width="58" height="1.6" fill="#1818f0" opacity="0.66" filter="url(#b1)"/><rect x="398" y="54.8" width="71" height="1.6" fill="#1818f0" opacity="0.71" filter="url(#b1)"/><rect x="424" y="25.5" width="31" height="2" fill="#050596" opacity="0.46" filter="url(#b1)"/><rect x="-20" y="228.3" width="42" height="1.6" fill="#1818f0" opacity="0.43" filter="url(#b1)"/><rect x="15" y="79.3" width="101" height="1.6" fill="#1818f0" opacity="0.67" filter="url(#b1)"/><rect x="180" y="96.5" width="73" height="2" fill="#050596" opacity="0.31" filter="url(#b1)"/><rect x="483" y="9.4" width="48" height="1.6" fill="#1818f0" opacity="0.52" filter="url(#b1)"/><rect x="527" y="224.3" width="63" height="1.6" fill="#1818f0" opacity="0.39" filter="url(#b1)"/><rect x="497" y="72.3" width="101" height="2" fill="#050596" opacity="0.36" filter="url(#b1)"/><rect x="178" y="201.4" width="63" height="1.6" fill="#1818f0" opacity="0.38" filter="url(#b1)"/><rect x="537" y="211.4" width="38" height="1.6" fill="#1818f0" opacity="0.58" filter="url(#b1)"/><rect x="473" y="47.6" width="25" height="2" fill="#050596" opacity="0.33" filter="url(#b1)"/><rect x="155" y="174.7" width="101" height="1.6" fill="#1818f0" opacity="0.69" filter="url(#b1)"/><rect x="56" y="171.7" width="83" height="1.6" fill="#1818f0" opacity="0.72" filter="url(#b1)"/><rect x="24" y="107.9" width="40" height="2" fill="#050596" opacity="0.39" filter="url(#b1)"/><rect x="90" y="171.1" width="36" height="1.6" fill="#1818f0" opacity="0.41" filter="url(#b1)"/><rect x="423" y="160.2" width="54" height="1.6" fill="#1818f0" opacity="0.60" filter="url(#b1)"/><rect x="310" y="212.5" width="41" height="2" fill="#050596" opacity="0.39" filter="url(#b1)"/><rect x="354" y="222.6" width="45" height="1.6" fill="#1818f0" opacity="0.59" filter="url(#b1)"/><rect x="530" y="23.4" width="60" height="1.6" fill="#1818f0" opacity="0.54" filter="url(#b1)"/><rect x="5" y="128.3" width="74" height="2" fill="#050596" opacity="0.39" filter="url(#b1)"/><rect x="430" y="61.7" width="28" height="1.6" fill="#1818f0" opacity="0.43" filter="url(#b1)"/><rect x="118" y="181.9" width="45" height="1.6" fill="#1818f0" opacity="0.55" filter="url(#b1)"/><rect x="482" y="46.4" width="109" height="2" fill="#050596" opacity="0.31" filter="url(#b1)"/><rect x="400" y="111.9" width="55" height="1.6" fill="#1818f0" opacity="0.72" filter="url(#b1)"/><rect x="81" y="121.0" width="70" height="1.6" fill="#1818f0" opacity="0.59" filter="url(#b1)"/><rect x="349" y="87.6" width="90" height="2" fill="#050596" opacity="0.46" filter="url(#b1)"/><rect x="453" y="122.3" width="82" height="1.6" fill="#1818f0" opacity="0.53" filter="url(#b1)"/><rect x="77" y="228.5" width="90" height="1.6" fill="#1818f0" opacity="0.37" filter="url(#b1)"/><rect x="112" y="146.7" width="60" height="2" fill="#050596" opacity="0.53" filter="url(#b1)"/><rect x="423" y="189.2" width="41" height="1.6" fill="#1818f0" opacity="0.52" filter="url(#b1)"/><rect x="305" y="54.7" width="65" height="1.6" fill="#1818f0" opacity="0.32" filter="url(#b1)"/><rect x="380" y="144.0" width="72" height="2" fill="#050596" opacity="0.56" filter="url(#b1)"/><rect x="65" y="44.8" width="22" height="1.6" fill="#1818f0" opacity="0.52" filter="url(#b1)"/><rect x="227" y="105.4" width="44" height="1.6" fill="#1818f0" opacity="0.66" filter="url(#b1)"/><rect x="488" y="19.3" width="71" height="2" fill="#050596" opacity="0.46" filter="url(#b1)"/><rect x="113" y="190.4" width="33" height="1.6" fill="#1818f0" opacity="0.44" filter="url(#b1)"/><rect x="156" y="12.1" width="76" height="1.6" fill="#1818f0" opacity="0.54" filter="url(#b1)"/><rect x="310" y="65.0" width="28" height="2" fill="#050596" opacity="0.55" filter="url(#b1)"/><rect x="123" y="42.8" width="34" height="1.6" fill="#1818f0" opacity="0.61" filter="url(#b1)"/><rect x="421" y="199.8" width="26" height="1.6" fill="#1818f0" opacity="0.48" filter="url(#b1)"/><rect x="101" y="88.7" width="107" height="2" fill="#050596" opacity="0.31" filter="url(#b1)"/><rect x="406" y="118.5" width="109" height="1.6" fill="#1818f0" opacity="0.37" filter="url(#b1)"/><rect x="397" y="110.4" width="24" height="1.6" fill="#1818f0" opacity="0.41" filter="url(#b1)"/><rect x="59" y="213.8" width="55" height="2" fill="#050596" opacity="0.39" filter="url(#b1)"/><rect x="23" y="103.0" width="23" height="1.6" fill="#1818f0" opacity="0.75" filter="url(#b1)"/><rect x="391" y="183.7" width="41" height="1.6" fill="#1818f0" opacity="0.41" filter="url(#b1)"/><rect x="115" y="133.3" width="62" height="2" fill="#050596" opacity="0.58" filter="url(#b1)"/><rect x="169" y="88.6" width="108" height="1.6" fill="#1818f0" opacity="0.57" filter="url(#b1)"/><rect x="206" y="11.4" width="78" height="1.6" fill="#1818f0" opacity="0.33" filter="url(#b1)"/><rect x="369" y="83.7" width="98" height="2" fill="#050596" opacity="0.48" filter="url(#b1)"/><rect x="239" y="213.0" width="55" height="1.6" fill="#1818f0" opacity="0.68" filter="url(#b1)"/><rect x="418" y="92.7" width="39" height="1.6" fill="#1818f0" opacity="0.46" filter="url(#b1)"/><rect x="288" y="45.7" width="35" height="2" fill="#050596" opacity="0.36" filter="url(#b1)"/><rect x="242" y="53.0" width="48" height="1.6" fill="#1818f0" opacity="0.50" filter="url(#b1)"/><rect x="360" y="238.4" width="98" height="1.6" fill="#1818f0" opacity="0.39" filter="url(#b1)"/><rect x="21" y="93.1" width="82" height="2" fill="#050596" opacity="0.41" filter="url(#b1)"/><rect x="-10" y="67.3" width="36" height="1.6" fill="#1818f0" opacity="0.42" filter="url(#b1)"/><rect x="497" y="95.5" width="84" height="1.6" fill="#1818f0" opacity="0.42" filter="url(#b1)"/><rect x="66" y="87.9" width="104" height="2" fill="#050596" opacity="0.41" filter="url(#b1)"/><rect x="385" y="184.2" width="102" height="1.6" fill="#1818f0" opacity="0.31" filter="url(#b1)"/><rect x="195" y="78.7" width="27" height="1.6" fill="#1818f0" opacity="0.70" filter="url(#b1)"/><rect x="412" y="79.4" width="67" height="2" fill="#050596" opacity="0.32" filter="url(#b1)"/><rect x="113" y="95.8" width="24" height="1.6" fill="#1818f0" opacity="0.37" filter="url(#b1)"/><rect x="-2" y="143.7" width="48" height="1.6" fill="#1818f0" opacity="0.49" filter="url(#b1)"/><rect x="56" y="131.5" width="84" height="2" fill="#050596" opacity="0.38" filter="url(#b1)"/><rect x="353" y="174.7" width="33" height="1.6" fill="#1818f0" opacity="0.39" filter="url(#b1)"/><rect x="379" y="68.7" width="56" height="1.6" fill="#1818f0" opacity="0.47" filter="url(#b1)"/><rect x="107" y="208.1" width="46" height="2" fill="#050596" opacity="0.40" filter="url(#b1)"/><rect x="3" y="53.3" width="22" height="1.6" fill="#1818f0" opacity="0.58" filter="url(#b1)"/><rect x="433" y="136.7" width="108" height="1.6" fill="#1818f0" opacity="0.43" filter="url(#b1)"/><rect x="495" y="161.6" width="39" height="2" fill="#050596" opacity="0.51" filter="url(#b1)"/><rect x="515" y="160.6" width="98" height="1.6" fill="#1818f0" opacity="0.41" filter="url(#b1)"/><rect x="30" y="152.5" width="58" height="1.6" fill="#1818f0" opacity="0.48" filter="url(#b1)"/><rect x="195" y="16.3" width="50" height="2" fill="#050596" opacity="0.45" filter="url(#b1)"/><rect x="69" y="68.6" width="56" height="1.6" fill="#1818f0" opacity="0.51" filter="url(#b1)"/><rect x="353" y="41.7" width="42" height="1.6" fill="#1818f0" opacity="0.34" filter="url(#b1)"/><rect x="216" y="83.4" width="34" height="2" fill="#050596" opacity="0.47" filter="url(#b1)"/><rect x="290" y="168.9" width="83" height="1.6" fill="#1818f0" opacity="0.31" filter="url(#b1)"/><rect x="184" y="95.1" width="26" height="1.6" fill="#1818f0" opacity="0.48" filter="url(#b1)"/><rect x="258" y="15.0" width="73" height="2" fill="#050596" opacity="0.44" filter="url(#b1)"/><rect x="122" y="79.5" width="22" height="1.6" fill="#1818f0" opacity="0.46" filter="url(#b1)"/><rect x="297" y="214.2" width="44" height="1.6" fill="#1818f0" opacity="0.60" filter="url(#b1)"/><rect x="243" y="46.3" width="75" height="2" fill="#050596" opacity="0.59" filter="url(#b1)"/><rect x="303" y="88.3" width="105" height="1.6" fill="#1818f0" opacity="0.65" filter="url(#b1)"/><rect x="328" y="151.3" width="57" height="1.6" fill="#1818f0" opacity="0.49" filter="url(#b1)"/><rect x="445" y="67.7" width="99" height="2" fill="#050596" opacity="0.41" filter="url(#b1)"/><rect x="1" y="218.5" width="32" height="1.6" fill="#1818f0" opacity="0.53" filter="url(#b1)"/><rect x="182" y="75.4" width="108" height="1.6" fill="#1818f0" opacity="0.37" filter="url(#b1)"/><rect x="108" y="47.8" width="81" height="2" fill="#050596" opacity="0.37" filter="url(#b1)"/><rect x="285" y="2.2" width="55" height="1.6" fill="#1818f0" opacity="0.41" filter="url(#b1)"/><rect x="344" y="119.5" width="69" height="1.6" fill="#1818f0" opacity="0.58" filter="url(#b1)"/><rect x="445" y="135.5" width="107" height="2" fill="#050596" opacity="0.40" filter="url(#b1)"/><rect x="476" y="84.5" width="48" height="1.6" fill="#1818f0" opacity="0.62" filter="url(#b1)"/><rect x="364" y="167.5" width="107" height="1.6" fill="#1818f0" opacity="0.67" filter="url(#b1)"/><rect x="328" y="40.0" width="64" height="2" fill="#050596" opacity="0.47" filter="url(#b1)"/><rect x="140" y="89.9" width="87" height="1.6" fill="#1818f0" opacity="0.54" filter="url(#b1)"/><rect x="120" y="58.4" width="49" height="1.6" fill="#1818f0" opacity="0.38" filter="url(#b1)"/><rect x="51" y="124.3" width="26" height="2" fill="#050596" opacity="0.32" filter="url(#b1)"/><rect x="375" y="26.3" width="30" height="1.6" fill="#1818f0" opacity="0.50" filter="url(#b1)"/><rect x="249" y="185.8" width="35" height="1.6" fill="#1818f0" opacity="0.69" filter="url(#b1)"/><rect x="10" y="209.0" width="43" height="2" fill="#050596" opacity="0.45" filter="url(#b1)"/><rect x="200" y="191.6" width="84" height="1.6" fill="#1818f0" opacity="0.41" filter="url(#b1)"/><rect x="163" y="172.3" width="50" height="1.6" fill="#1818f0" opacity="0.64" filter="url(#b1)"/><rect x="444" y="202.6" width="71" height="2" fill="#050596" opacity="0.43" filter="url(#b1)"/><rect x="329" y="170.2" width="95" height="1.6" fill="#1818f0" opacity="0.66" filter="url(#b1)"/><rect x="191" y="31.8" width="80" height="1.6" fill="#1818f0" opacity="0.40" filter="url(#b1)"/><rect x="-12" y="45.9" width="73" height="2" fill="#050596" opacity="0.58" filter="url(#b1)"/><rect x="55" y="233.0" width="82" height="1.6" fill="#1818f0" opacity="0.49" filter="url(#b1)"/><rect x="202" y="152.3" width="104" height="1.6" fill="#1818f0" opacity="0.74" filter="url(#b1)"/><rect x="379" y="13.6" width="31" height="2" fill="#050596" opacity="0.31" filter="url(#b1)"/><rect x="389" y="70.1" width="109" height="1.6" fill="#1818f0" opacity="0.35" filter="url(#b1)"/><rect x="-5" y="80.6" width="69" height="1.6" fill="#1818f0" opacity="0.52" filter="url(#b1)"/><rect x="153" y="90.9" width="92" height="2" fill="#050596" opacity="0.55" filter="url(#b1)"/><rect x="199" y="69.5" width="76" height="1.6" fill="#1818f0" opacity="0.64" filter="url(#b1)"/><rect x="198" y="235.5" width="82" height="1.6" fill="#1818f0" opacity="0.55" filter="url(#b1)"/><rect x="62" y="192.4" width="36" height="2" fill="#050596" opacity="0.33" filter="url(#b1)"/><rect x="121" y="224.2" width="64" height="1.6" fill="#1818f0" opacity="0.35" filter="url(#b1)"/><rect x="-9" y="79.0" width="71" height="1.6" fill="#1818f0" opacity="0.36" filter="url(#b1)"/><rect x="133" y="150.8" width="40" height="2" fill="#050596" opacity="0.44" filter="url(#b1)"/><rect x="125" y="89.1" width="25" height="1.6" fill="#1818f0" opacity="0.33" filter="url(#b1)"/><rect x="153" y="214.4" width="27" height="1.6" fill="#1818f0" opacity="0.38" filter="url(#b1)"/><rect x="538" y="117.1" width="38" height="2" fill="#050596" opacity="0.56" filter="url(#b1)"/><rect x="212" y="117.3" width="93" height="1.6" fill="#1818f0" opacity="0.48" filter="url(#b1)"/><rect x="288" y="15.7" width="79" height="1.6" fill="#1818f0" opacity="0.58" filter="url(#b1)"/><rect x="506" y="68.0" width="98" height="2" fill="#050596" opacity="0.60" filter="url(#b1)"/><rect x="447" y="107.5" width="85" height="1.6" fill="#1818f0" opacity="0.38" filter="url(#b1)"/><rect x="75" y="8.4" width="31" height="1.6" fill="#1818f0" opacity="0.33" filter="url(#b1)"/><rect x="402" y="87.4" width="48" height="2" fill="#050596" opacity="0.45" filter="url(#b1)"/><rect x="98" y="4.5" width="106" height="1.6" fill="#1818f0" opacity="0.30" filter="url(#b1)"/><rect x="434" y="127.5" width="91" height="1.6" fill="#1818f0" opacity="0.63" filter="url(#b1)"/><path d="M205 100 Q380 48 556 13" fill="none" stroke="#2244ff" stroke-width="1.8" opacity=".85" filter="url(#b1)"/><path d="M100 95 Q180 55 262 42" fill="none" stroke="#1c38f0" stroke-width="3" opacity=".45" filter="url(#b2)"/><path d="M184 98 Q162 150 126 240" fill="none" stroke="#1c30f0" stroke-width="9" opacity=".45" filter="url(#b3)"/><path d="M262 66 Q230 90 205 96" fill="none" stroke="#1c30f0" stroke-width="5" opacity=".4" filter="url(#b3)"/><path d="M262 62 Q300 40 345 36" fill="none" stroke="#1c38f0" stroke-width="4" opacity=".4" filter="url(#b2)"/><path d="M0 216 h12" stroke="#2a9cff" stroke-width="1.5"/><ellipse cx="85" cy="200" rx="10.5" ry="70" fill="#1a58ff" opacity="1" filter="url(#b3)"/><ellipse cx="85" cy="215" rx="8.5" ry="30" fill="#1c90ff" opacity="0.85" filter="url(#b3)"/><ellipse cx="85" cy="182" rx="10.5" ry="28" fill="#18b8ff" opacity="1" filter="url(#b2)"/><ellipse cx="85" cy="179" rx="8" ry="16" fill="#20e0ff" opacity="1" filter="url(#b2)"/><ellipse cx="83.5" cy="178.5" rx="11" ry="9.5" fill="#ffe800" opacity="1" filter="url(#b1)"/><rect x="76.5" y="173.3" width="13.5" height="10.6" fill="#f02000" filter="url(#b1)"/><rect x="79" y="175" width="8" height="7" fill="#a80808" filter="url(#b1)"/><ellipse cx="197" cy="120" rx="9" ry="115" fill="#1840f8" opacity="0.95" filter="url(#b5)"/><ellipse cx="196" cy="82" rx="13" ry="32" fill="#18a8ff" opacity="1" filter="url(#b3)"/><ellipse cx="196" cy="82" rx="11" ry="18" fill="#20e0ff" opacity="1" filter="url(#b2)"/><ellipse cx="195" cy="87" rx="8.5" ry="7.5" fill="#f0f020" opacity="1" filter="url(#b2)"/><ellipse cx="199" cy="101" rx="9" ry="2.5" fill="#20c0ff" opacity="0.9" filter="url(#b1)"/><ellipse cx="197" cy="212" rx="10.5" ry="38" fill="#1890ff" opacity="1" filter="url(#b3)"/><ellipse cx="197" cy="206" rx="8.5" ry="22" fill="#20c8ff" opacity="0.9" filter="url(#b3)"/><ellipse cx="248" cy="50" rx="9" ry="12" fill="#1850ff" opacity="0.8" filter="url(#b3)"/><ellipse cx="250" cy="62.5" rx="11" ry="8" fill="#18b0ff" opacity="1" filter="url(#b2)"/><ellipse cx="250" cy="63.5" rx="9" ry="4.5" fill="#30e8f0" opacity="1" filter="url(#b1)"/><ellipse cx="250" cy="64" rx="6.5" ry="2.3" fill="#e8f030" opacity="1" filter="url(#b1)"/><ellipse cx="256.5" cy="113.5" rx="11.5" ry="9.5" fill="#18a8ff" opacity="1" filter="url(#b2)"/><ellipse cx="256.5" cy="113.5" rx="9" ry="7" fill="#28e8f0" opacity="1" filter="url(#b2)"/><ellipse cx="255" cy="114.5" rx="6" ry="4.5" fill="#80ffa0" opacity="1" filter="url(#b2)"/><path d="M334 50 Q330 70 336 84 Q348 98 342 116 Q336 130 336 160 L336 242" fill="none" stroke="#1848ff" stroke-width="22" opacity=".9" filter="url(#b5)"/><path d="M333 62 Q330 74 336 84 Q348 98 342 116 Q338 130 338 146" fill="none" stroke="#18a8ff" stroke-width="27" stroke-linecap="round" filter="url(#b3)"/><path d="M334 70 Q332 78 337 86 Q347 98 342 114 Q339 126 339 138" fill="none" stroke="#20e0ff" stroke-width="20" stroke-linecap="round" filter="url(#b2)"/><path d="M335 78 Q334 84 339 90 Q347 99 343 110" fill="none" stroke="#f4f018" stroke-width="14.5" stroke-linecap="round" filter="url(#b2)"/><path d="M458 53 L488 73 L466 86 L498 106 L477 117 Q470 170 473 242" fill="none" stroke="#1224f4" stroke-width="11" opacity=".85" filter="url(#b3)"/><path d="M478 130 Q472 170 474 242" fill="none" stroke="#1830ff" stroke-width="5" opacity=".5" filter="url(#b3)"/><rect x="0" y="0" width="556" height="242" fill="url(#vs)"/></g><rect x="556" y="0" width="14" height="243" fill="url(#cb)"/></svg>
<div class="t" style="font-family:'Liberation Serif','Noto Serif CJK SC',serif;left:425px;top:507.300px;width:30px;text-align:center;font-size:7px;color:#333"><span style="display:inline-block;width:3.5px;text-align:center">0</span><span style="display:inline-block;width:3.5px;text-align:center">.</span><span style="display:inline-block;width:3.5px;text-align:center">0</span></div>
<div class="t" style="font-family:'Liberation Serif','Noto Serif CJK SC',serif;left:486.778px;top:507.300px;width:30px;text-align:center;font-size:7px;color:#333"><span style="display:inline-block;width:3.5px;text-align:center">1</span><span style="display:inline-block;width:3.5px;text-align:center">.</span><span style="display:inline-block;width:3.5px;text-align:center">1</span></div>
<div class="t" style="font-family:'Liberation Serif','Noto Serif CJK SC',serif;left:548.556px;top:507.300px;width:30px;text-align:center;font-size:7px;color:#333"><span style="display:inline-block;width:3.5px;text-align:center">2</span><span style="display:inline-block;width:3.5px;text-align:center">.</span><span style="display:inline-block;width:3.5px;text-align:center">2</span></div>
<div class="t" style="font-family:'Liberation Serif','Noto Serif CJK SC',serif;left:610.333px;top:507.300px;width:30px;text-align:center;font-size:7px;color:#333"><span style="display:inline-block;width:3.5px;text-align:center">3</span><span style="display:inline-block;width:3.5px;text-align:center">.</span><span style="display:inline-block;width:3.5px;text-align:center">3</span></div>
<div class="t" style="font-family:'Liberation Serif','Noto Serif CJK SC',serif;left:672.111px;top:507.300px;width:30px;text-align:center;font-size:7px;color:#333"><span style="display:inline-block;width:3.5px;text-align:center">4</span><span style="display:inline-block;width:3.5px;text-align:center">.</span><span style="display:inline-block;width:3.5px;text-align:center">4</span></div>
<div class="t" style="font-family:'Liberation Serif','Noto Serif CJK SC',serif;left:733.889px;top:507.300px;width:30px;text-align:center;font-size:7px;color:#333"><span style="display:inline-block;width:3.5px;text-align:center">5</span><span style="display:inline-block;width:3.5px;text-align:center">.</span><span style="display:inline-block;width:3.5px;text-align:center">5</span></div>
<div class="t" style="font-family:'Liberation Serif','Noto Serif CJK SC',serif;left:795.667px;top:507.300px;width:30px;text-align:center;font-size:7px;color:#333"><span style="display:inline-block;width:3.5px;text-align:center">6</span><span style="display:inline-block;width:3.5px;text-align:center">.</span><span style="display:inline-block;width:3.5px;text-align:center">6</span></div>
<div class="t" style="font-family:'Liberation Serif','Noto Serif CJK SC',serif;left:857.444px;top:507.300px;width:30px;text-align:center;font-size:7px;color:#333"><span style="display:inline-block;width:3.5px;text-align:center">7</span><span style="display:inline-block;width:3.5px;text-align:center">.</span><span style="display:inline-block;width:3.5px;text-align:center">7</span></div>
<div class="t" style="font-family:'Liberation Serif','Noto Serif CJK SC',serif;left:919.222px;top:507.300px;width:30px;text-align:center;font-size:7px;color:#333"><span style="display:inline-block;width:3.5px;text-align:center">8</span><span style="display:inline-block;width:3.5px;text-align:center">.</span><span style="display:inline-block;width:3.5px;text-align:center">7</span></div>
<div class="t" style="font-family:'Liberation Serif','Noto Serif CJK SC',serif;left:981px;top:507.300px;width:30px;text-align:center;font-size:7px;color:#333"><span style="display:inline-block;width:3.5px;text-align:center">9</span><span style="display:inline-block;width:3.5px;text-align:center">.</span><span style="display:inline-block;width:3.5px;text-align:center">8</span></div>
<div class="t" style="font-family:'Liberation Serif','Noto Serif CJK SC',serif;left:1013px;top:259.4px;font-size:7px;color:#333"><span style="display:inline-block;width:3.5px;text-align:center">1</span><span style="display:inline-block;width:3.5px;text-align:center">.</span><span style="display:inline-block;width:3.5px;text-align:center">0</span><span style="display:inline-block;width:3.5px;text-align:center">3</span></div>
<div class="t" style="font-family:'Liberation Serif','Noto Serif CJK SC',serif;left:1013px;top:307.8px;font-size:7px;color:#333"><span style="display:inline-block;width:3.5px;text-align:center">0</span><span style="display:inline-block;width:3.5px;text-align:center">.</span><span style="display:inline-block;width:3.5px;text-align:center">8</span><span style="display:inline-block;width:3.5px;text-align:center">3</span></div>
<div class="t" style="font-family:'Liberation Serif','Noto Serif CJK SC',serif;left:1013px;top:356.2px;font-size:7px;color:#333"><span style="display:inline-block;width:3.5px;text-align:center">0</span><span style="display:inline-block;width:3.5px;text-align:center">.</span><span style="display:inline-block;width:3.5px;text-align:center">6</span><span style="display:inline-block;width:3.5px;text-align:center">2</span></div>
<div class="t" style="font-family:'Liberation Serif','Noto Serif CJK SC',serif;left:1013px;top:404.6px;font-size:7px;color:#333"><span style="display:inline-block;width:3.5px;text-align:center">0</span><span style="display:inline-block;width:3.5px;text-align:center">.</span><span style="display:inline-block;width:3.5px;text-align:center">4</span><span style="display:inline-block;width:3.5px;text-align:center">1</span></div>
<div class="t" style="font-family:'Liberation Serif','Noto Serif CJK SC',serif;left:1013px;top:453px;font-size:7px;color:#333"><span style="display:inline-block;width:3.5px;text-align:center">0</span><span style="display:inline-block;width:3.5px;text-align:center">.</span><span style="display:inline-block;width:3.5px;text-align:center">2</span><span style="display:inline-block;width:3.5px;text-align:center">1</span></div>
<div class="t" style="font-family:'Liberation Serif','Noto Serif CJK SC',serif;left:1013px;top:501.4px;font-size:7px;color:#333"><span style="display:inline-block;width:3.5px;text-align:center">0</span><span style="display:inline-block;width:3.5px;text-align:center">.</span><span style="display:inline-block;width:3.5px;text-align:center">0</span><span style="display:inline-block;width:3.5px;text-align:center">0</span></div>
<div class="a" style="left:333.500px;top:532px;width:733px;height:11px;background:#c3c3c3"></div>
<div class="a" style="left:336px;top:532.500px;width:30px;height:10px;background:#e8e8e8;border:1px solid #b0b0b0;border-top:none"></div>
<div class="a" style="left:366px;top:532px;width:37.500px;height:10.500px;background:#fff"></div>
<div class="t" style="left:339.500px;top:533.200px;font-size:7px">画面<span style="font-size:7.300px">01</span></div>
<div class="t" style="left:373.500px;top:533.200px;font-size:7px">画面<span style="font-size:7.300px">02</span></div>
<div class="a" style="left:330px;top:543px;width:740px;height:5.500px;background:#f0f0f0"></div>
<div class="a" style="left:333px;top:548.500px;width:541px;height:10px;background:linear-gradient(#e3e3e3,#d8d8d8);border:1px solid #cfcfcf"></div>
<div class="t" style="left:337px;top:549.200px">运行日志</div>
<div class="a" style="left:881.500px;top:548.500px;width:185px;height:10px;background:linear-gradient(#e3e3e3,#d8d8d8);border:1px solid #cfcfcf"></div>
<div class="t" style="left:885px;top:549.200px">计算结果输出</div>
<svg class="a" style="left:846.5px;top:549.8px" width="27" height="8" viewBox="0 0 27 8"><path d="M1 2.600l2.500 2.600 2.500-2.600" fill="none" stroke="#444" stroke-width=".9"/><path d="M10.500 6.500l2-2M12 2l2.800 2.800M12.800 1.600l2.600 2.600M11.600 3.400l1.800 1.800" stroke="#444" stroke-width=".8" fill="none"/><path d="M19.600 1.400l5 5.200M24.600 1.400l-5 5.200" stroke="#222" stroke-width="1.100"/></svg>
<svg class="a" style="left:1038.5px;top:549.8px" width="27" height="8" viewBox="0 0 27 8"><path d="M1 2.600l2.500 2.600 2.500-2.600" fill="none" stroke="#444" stroke-width=".9"/><path d="M10.500 6.500l2-2M12 2l2.800 2.800M12.800 1.600l2.600 2.600M11.600 3.400l1.800 1.800" stroke="#444" stroke-width=".8" fill="none"/><path d="M19.600 1.400l5 5.200M24.600 1.400l-5 5.200" stroke="#222" stroke-width="1.100"/></svg>
<svg class="a" style="left:336.500px;top:560.500px" width="11" height="10" viewBox="0 0 11 10"><path d="M5 .5h1.200v4h-1.200z" fill="#7a4fb0"/><path d="M2.500 4.500h6l1 2h-8z" fill="#e05050"/><path d="M1 6.500h9l.5 3h-10z" fill="#4a7fd0"/></svg>
<div class="a" style="left:350.500px;top:560px;width:1px;height:11px;background:#9a9a9a"></div>
<div class="a" style="left:353.4px;top:560px;width:16px;height:11px;background:#d6e6f8;border:1px solid #3a7fd0"></div>
<div class="a" style="left:357.5px;top:561.600px;width:7.800px;height:7.800px;border-radius:50%;background:#1e7be0"></div>
<div class="a" style="left:360.7px;top:563.600px;width:1.400px;height:2px;background:#fff;opacity:.85"></div>
<div class="a" style="left:370.4px;top:560px;width:16px;height:11px;background:#d6e6f8;border:1px solid #3a7fd0"></div>
<div class="a" style="left:374.5px;top:561.600px;width:7.800px;height:7.800px;border-radius:50%;background:#f0a818"></div>
<div class="a" style="left:377.7px;top:563.600px;width:1.400px;height:2px;background:#fff;opacity:.85"></div>
<div class="a" style="left:387.4px;top:560px;width:16px;height:11px;background:#d6e6f8;border:1px solid #3a7fd0"></div>
<div class="a" style="left:391.5px;top:561.600px;width:7.800px;height:7.800px;border-radius:50%;background:#e82828"></div>
<div class="a" style="left:394.7px;top:563.600px;width:1.400px;height:2px;background:#fff;opacity:.85"></div>
<div class="a" style="left:404.4px;top:560px;width:16px;height:11px;background:#d6e6f8;border:1px solid #3a7fd0"></div>
<div class="a" style="left:408.5px;top:561.600px;width:7.800px;height:7.800px;border-radius:50%;background:#1aa060"></div>
<div class="a" style="left:411.7px;top:563.600px;width:1.400px;height:2px;background:#fff;opacity:.85"></div>
<div class="a" style="left:421.4px;top:560px;width:16px;height:11px;background:#d6e6f8;border:1px solid #3a7fd0"></div>
<div class="a" style="left:425.5px;top:561.600px;width:7.800px;height:7.800px;border-radius:50%;background:#8c1010"></div>
<div class="a" style="left:428.7px;top:563.600px;width:1.400px;height:2px;background:#fff;opacity:.85"></div>
<div class="a" style="left:438px;top:560.500px;width:201.500px;height:10px;background:#fff;border:1px solid #b0b0b0"></div>
<svg class="a" style="left:643.500px;top:560.500px" width="11" height="10" viewBox="0 0 11 10"><circle cx="4.200" cy="4" r="2.800" fill="#d6ecff" stroke="#3a7fd0" stroke-width="1.100"/><path d="M6.400 6.200l3 3" stroke="#3a7fd0" stroke-width="1.400"/></svg>
<svg class="a" style="left:661px;top:561px" width="9" height="9" viewBox="0 0 9 9"><path d="M7.200 2.600a3.200 3.200 0 1 0 .4 3.200" fill="none" stroke="#2b62c8" stroke-width="1.300"/><path d="M5.600 2.800h2.600v-2.600z" fill="#2b62c8"/></svg>
<div class="a" style="left:333px;top:572px;width:542px;height:48px;background:#fff;border:1px solid #b5b5b5;border-bottom:none"></div>
<div class="a" style="left:865px;top:573px;width:9px;height:47px;background:#f0f0f0"></div>
<div class="a" style="left:865.500px;top:615.500px;width:8px;height:5px;background:#c1c1c1"></div>
<svg class="a" style="left:866px;top:574px" width="7" height="5" viewBox="0 0 7 5"><path d="M.8 4l2.700-2.800 2.700 2.800" fill="none" stroke="#333" stroke-width="1"/></svg>
<div class="a" style="left:337px;top:573.4px;width:7.400px;height:7.400px;border-radius:50%;background:#18a06a"></div>
<div class="a" style="left:340px;top:575.5px;width:1.400px;height:2.200px;background:#fff;opacity:.85"></div>
<div class="t" style="left:348.800px;top:572.6px"><span style="font-size:7.5px">[2022-07-10 15:09:13.594] </span>输出<span style="font-size:7.73px">:err_msg =</span></div>
<div class="a" style="left:337px;top:583.08px;width:7.400px;height:7.400px;border-radius:50%;background:#18a06a"></div>
<div class="a" style="left:340px;top:585.18px;width:1.400px;height:2.200px;background:#fff;opacity:.85"></div>
<div class="t" style="left:348.800px;top:582.28px"><span style="font-size:7.5px">[2022-07-10 15:09:13.661] </span>输出<span style="font-size:7.73px">:output_file = R:/TEMP/rainfe/dataLab/alg/2022-07-10_15.09.07/OrderTrackresult.csv</span></div>
<div class="a" style="left:337px;top:592.76px;width:7.400px;height:7.400px;border-radius:50%;background:#18a06a"></div>
<div class="a" style="left:340px;top:594.86px;width:1.400px;height:2.200px;background:#fff;opacity:.85"></div>
<div class="t" style="left:348.800px;top:591.96px"><span style="font-size:7.5px">[2022-07-10 15:09:36.387] </span>创建画面：画面<span style="font-size:7.73px">01</span></div>
<div class="a" style="left:337px;top:602.44px;width:7.400px;height:7.400px;border-radius:50%;background:#18a06a"></div>
<div class="a" style="left:340px;top:604.54px;width:1.400px;height:2.200px;background:#fff;opacity:.85"></div>
<div class="t" style="left:348.800px;top:601.64px"><span style="font-size:7.5px">[2022-07-10 15:11:57.029] </span>删除画面：画面<span style="font-size:7.73px">04</span></div>
<div class="a" style="left:337px;top:612.12px;width:7.400px;height:7.400px;border-radius:50%;background:#18a06a"></div>
<div class="a" style="left:340px;top:614.22px;width:1.400px;height:2.200px;background:#fff;opacity:.85"></div>
<div class="t" style="left:348.800px;top:611.32px"><span style="font-size:7.5px">[2022-07-10 15:11:59.482] </span>删除画面：画面<span style="font-size:7.73px">05</span></div>
<div class="a" style="left:886px;top:563.500px;width:176.800px;height:58px;background:#fff;border:1px solid #b5b5b5"></div>
<svg class="a" style="left:948px;top:584px" width="32" height="30" viewBox="0 0 32 30"><g fill="#dadada"><path d="M2.600 21.500Q3.600 5.400 10.500 4L28 4Q30 4.200 29.300 6.800Q13.500 7.500 6.600 16.500Q4.500 19 2.600 21.500Z"/><path d="M8.700 26.300Q10 12.500 28.700 10.200L28 13.600Q16 15.200 13.600 26.300Z"/><path d="M18.700 26.800Q17.300 17 24 15.300Q28.700 14.600 28 18.200L26.700 25Q26.300 26.800 24.500 26.800Z"/></g></svg>
<div class="t" style="left:979.500px;top:585px;height:28px;line-height:28px;font-size:21.500px;font-weight:900;color:#d9d9d9;-webkit-text-stroke:0;letter-spacing:-.3px;transform:scale(.965,1.08);transform-origin:0 50%">瑞风协同</div>
<div class="a" style="left:116px;top:620px;width:979px;height:24px;background:#000;border-radius:0 0 26px 26px"></div>
</div></body></html>
